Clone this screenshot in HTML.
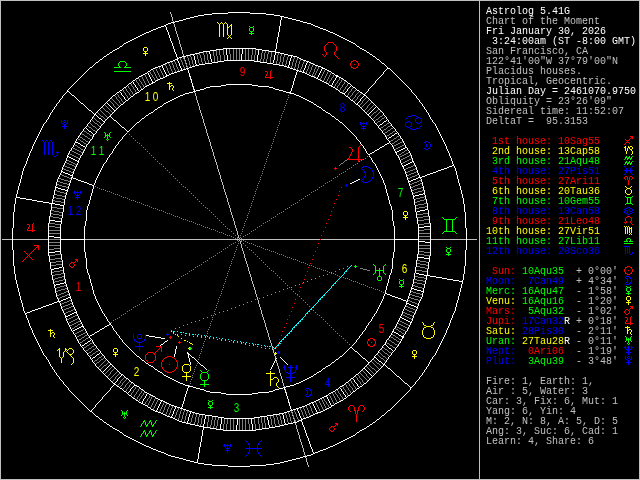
<!DOCTYPE html>
<html lang="en"><head><meta charset="utf-8"><title>Astrolog 5.41G - Chart of the Moment</title>
<style>
html,body{margin:0;padding:0;background:#000;}
body{width:640px;height:480px;overflow:hidden;}
svg{display:block;will-change:transform;}
.sb text{font-family:"Liberation Mono",monospace;font-size:10px;white-space:pre;}
.hn text{font-family:"Liberation Sans",sans-serif;font-size:12.5px;}
</style></head><body>
<svg width="640" height="480" viewBox="0 0 640 480">
<rect width="640" height="480" fill="#000"/>
<g id="chart" shape-rendering="crispEdges" fill="none" stroke-width="1" transform="translate(0,0.5)">
<g id="border"><path stroke="#c0c0c0" d="M0 0h640M0 1h1M479 1h1M639 1h1M0 2h1M479 2h1M639 2h1M0 3h1M479 3h1M639 3h1M0 4h1M479 4h1M639 4h1M0 5h1M479 5h1M639 5h1M0 6h1M479 6h1M639 6h1M0 7h1M479 7h1M639 7h1M0 8h1M479 8h1M639 8h1M0 9h1M479 9h1M639 9h1M0 10h1M479 10h1M639 10h1M0 11h1M479 11h1M639 11h1M0 12h1M479 12h1M639 12h1M0 13h1M479 13h1M639 13h1M0 14h1M479 14h1M639 14h1M0 15h1M479 15h1M639 15h1M0 16h1M479 16h1M639 16h1M0 17h1M479 17h1M639 17h1M0 18h1M479 18h1M639 18h1M0 19h1M479 19h1M639 19h1M0 20h1M479 20h1M639 20h1M0 21h1M479 21h1M639 21h1M0 22h1M479 22h1M639 22h1M0 23h1M479 23h1M639 23h1M0 24h1M479 24h1M639 24h1M0 25h1M479 25h1M639 25h1M0 26h1M479 26h1M639 26h1M0 27h1M479 27h1M639 27h1M0 28h1M479 28h1M639 28h1M0 29h1M479 29h1M639 29h1M0 30h1M479 30h1M639 30h1M0 31h1M479 31h1M639 31h1M0 32h1M479 32h1M639 32h1M0 33h1M479 33h1M639 33h1M0 34h1M479 34h1M639 34h1M0 35h1M479 35h1M639 35h1M0 36h1M479 36h1M639 36h1M0 37h1M479 37h1M639 37h1M0 38h1M479 38h1M639 38h1M0 39h1M479 39h1M639 39h1M0 40h1M479 40h1M639 40h1M0 41h1M479 41h1M639 41h1M0 42h1M479 42h1M639 42h1M0 43h1M479 43h1M639 43h1M0 44h1M479 44h1M639 44h1M0 45h1M479 45h1M639 45h1M0 46h1M479 46h1M639 46h1M0 47h1M479 47h1M639 47h1M0 48h1M479 48h1M639 48h1M0 49h1M479 49h1M639 49h1M0 50h1M479 50h1M639 50h1M0 51h1M479 51h1M639 51h1M0 52h1M479 52h1M639 52h1M0 53h1M479 53h1M639 53h1M0 54h1M479 54h1M639 54h1M0 55h1M479 55h1M639 55h1M0 56h1M479 56h1M639 56h1M0 57h1M479 57h1M639 57h1M0 58h1M479 58h1M639 58h1M0 59h1M479 59h1M639 59h1M0 60h1M479 60h1M639 60h1M0 61h1M479 61h1M639 61h1M0 62h1M479 62h1M639 62h1M0 63h1M479 63h1M639 63h1M0 64h1M479 64h1M639 64h1M0 65h1M479 65h1M639 65h1M0 66h1M479 66h1M639 66h1M0 67h1M479 67h1M639 67h1M0 68h1M479 68h1M639 68h1M0 69h1M479 69h1M639 69h1M0 70h1M479 70h1M639 70h1M0 71h1M479 71h1M639 71h1M0 72h1M479 72h1M639 72h1M0 73h1M479 73h1M639 73h1M0 74h1M479 74h1M639 74h1M0 75h1M479 75h1M639 75h1M0 76h1M479 76h1M639 76h1M0 77h1M479 77h1M639 77h1M0 78h1M479 78h1M639 78h1M0 79h1M479 79h1M639 79h1M0 80h1M479 80h1M639 80h1M0 81h1M479 81h1M639 81h1M0 82h1M479 82h1M639 82h1M0 83h1M479 83h1M639 83h1M0 84h1M479 84h1M639 84h1M0 85h1M479 85h1M639 85h1M0 86h1M479 86h1M639 86h1M0 87h1M479 87h1M639 87h1M0 88h1M479 88h1M639 88h1M0 89h1M479 89h1M639 89h1M0 90h1M479 90h1M639 90h1M0 91h1M479 91h1M639 91h1M0 92h1M479 92h1M639 92h1M0 93h1M479 93h1M639 93h1M0 94h1M479 94h1M639 94h1M0 95h1M479 95h1M639 95h1M0 96h1M479 96h1M639 96h1M0 97h1M479 97h1M639 97h1M0 98h1M479 98h1M639 98h1M0 99h1M479 99h1M639 99h1M0 100h1M479 100h1M639 100h1M0 101h1M479 101h1M639 101h1M0 102h1M479 102h1M639 102h1M0 103h1M479 103h1M639 103h1M0 104h1M479 104h1M639 104h1M0 105h1M479 105h1M639 105h1M0 106h1M479 106h1M639 106h1M0 107h1M479 107h1M639 107h1M0 108h1M479 108h1M639 108h1M0 109h1M479 109h1M639 109h1M0 110h1M479 110h1M639 110h1M0 111h1M479 111h1M639 111h1M0 112h1M479 112h1M639 112h1M0 113h1M479 113h1M639 113h1M0 114h1M479 114h1M639 114h1M0 115h1M479 115h1M639 115h1M0 116h1M479 116h1M639 116h1M0 117h1M479 117h1M639 117h1M0 118h1M479 118h1M639 118h1M0 119h1M479 119h1M639 119h1M0 120h1M479 120h1M639 120h1M0 121h1M479 121h1M639 121h1M0 122h1M479 122h1M639 122h1M0 123h1M479 123h1M639 123h1M0 124h1M479 124h1M639 124h1M0 125h1M479 125h1M639 125h1M0 126h1M479 126h1M639 126h1M0 127h1M479 127h1M639 127h1M0 128h1M479 128h1M639 128h1M0 129h1M479 129h1M639 129h1M0 130h1M479 130h1M639 130h1M0 131h1M479 131h1M639 131h1M0 132h1M479 132h1M639 132h1M0 133h1M479 133h1M639 133h1M0 134h1M479 134h1M639 134h1M0 135h1M479 135h1M639 135h1M0 136h1M479 136h1M639 136h1M0 137h1M479 137h1M639 137h1M0 138h1M479 138h1M639 138h1M0 139h1M479 139h1M639 139h1M0 140h1M479 140h1M639 140h1M0 141h1M479 141h1M639 141h1M0 142h1M479 142h1M639 142h1M0 143h1M479 143h1M639 143h1M0 144h1M479 144h1M639 144h1M0 145h1M479 145h1M639 145h1M0 146h1M479 146h1M639 146h1M0 147h1M479 147h1M639 147h1M0 148h1M479 148h1M639 148h1M0 149h1M479 149h1M639 149h1M0 150h1M479 150h1M639 150h1M0 151h1M479 151h1M639 151h1M0 152h1M479 152h1M639 152h1M0 153h1M479 153h1M639 153h1M0 154h1M479 154h1M639 154h1M0 155h1M479 155h1M639 155h1M0 156h1M479 156h1M639 156h1M0 157h1M479 157h1M639 157h1M0 158h1M479 158h1M639 158h1M0 159h1M479 159h1M639 159h1M0 160h1M479 160h1M639 160h1M0 161h1M479 161h1M639 161h1M0 162h1M479 162h1M639 162h1M0 163h1M479 163h1M639 163h1M0 164h1M479 164h1M639 164h1M0 165h1M479 165h1M639 165h1M0 166h1M479 166h1M639 166h1M0 167h1M479 167h1M639 167h1M0 168h1M479 168h1M639 168h1M0 169h1M479 169h1M639 169h1M0 170h1M479 170h1M639 170h1M0 171h1M479 171h1M639 171h1M0 172h1M479 172h1M639 172h1M0 173h1M479 173h1M639 173h1M0 174h1M479 174h1M639 174h1M0 175h1M479 175h1M639 175h1M0 176h1M479 176h1M639 176h1M0 177h1M479 177h1M639 177h1M0 178h1M479 178h1M639 178h1M0 179h1M479 179h1M639 179h1M0 180h1M479 180h1M639 180h1M0 181h1M479 181h1M639 181h1M0 182h1M479 182h1M639 182h1M0 183h1M479 183h1M639 183h1M0 184h1M479 184h1M639 184h1M0 185h1M479 185h1M639 185h1M0 186h1M479 186h1M639 186h1M0 187h1M479 187h1M639 187h1M0 188h1M479 188h1M639 188h1M0 189h1M479 189h1M639 189h1M0 190h1M479 190h1M639 190h1M0 191h1M479 191h1M639 191h1M0 192h1M479 192h1M639 192h1M0 193h1M479 193h1M639 193h1M0 194h1M479 194h1M639 194h1M0 195h1M479 195h1M639 195h1M0 196h1M479 196h1M639 196h1M0 197h1M479 197h1M639 197h1M0 198h1M479 198h1M639 198h1M0 199h1M479 199h1M639 199h1M0 200h1M479 200h1M639 200h1M0 201h1M479 201h1M639 201h1M0 202h1M479 202h1M639 202h1M0 203h1M479 203h1M639 203h1M0 204h1M479 204h1M639 204h1M0 205h1M479 205h1M639 205h1M0 206h1M479 206h1M639 206h1M0 207h1M479 207h1M639 207h1M0 208h1M479 208h1M639 208h1M0 209h1M479 209h1M639 209h1M0 210h1M479 210h1M639 210h1M0 211h1M479 211h1M639 211h1M0 212h1M479 212h1M639 212h1M0 213h1M479 213h1M639 213h1M0 214h1M479 214h1M639 214h1M0 215h1M479 215h1M639 215h1M0 216h1M479 216h1M639 216h1M0 217h1M479 217h1M639 217h1M0 218h1M479 218h1M639 218h1M0 219h1M479 219h1M639 219h1M0 220h1M479 220h1M639 220h1M0 221h1M479 221h1M639 221h1M0 222h1M479 222h1M639 222h1M0 223h1M479 223h1M639 223h1M0 224h1M479 224h1M639 224h1M0 225h1M479 225h1M639 225h1M0 226h1M479 226h1M639 226h1M0 227h1M479 227h1M639 227h1M0 228h1M479 228h1M639 228h1M0 229h1M479 229h1M639 229h1M0 230h1M479 230h1M639 230h1M0 231h1M479 231h1M639 231h1M0 232h1M479 232h1M639 232h1M0 233h1M479 233h1M639 233h1M0 234h1M479 234h1M639 234h1M0 235h1M479 235h1M639 235h1M0 236h1M479 236h1M639 236h1M0 237h1M479 237h1M639 237h1M0 238h1M479 238h1M639 238h1M0 239h1M479 239h1M639 239h1M0 240h1M479 240h1M639 240h1M0 241h1M479 241h1M639 241h1M0 242h1M479 242h1M639 242h1M0 243h1M479 243h1M639 243h1M0 244h1M479 244h1M639 244h1M0 245h1M479 245h1M639 245h1M0 246h1M479 246h1M639 246h1M0 247h1M479 247h1M639 247h1M0 248h1M479 248h1M639 248h1M0 249h1M479 249h1M639 249h1M0 250h1M479 250h1M639 250h1M0 251h1M479 251h1M639 251h1M0 252h1M479 252h1M639 252h1M0 253h1M479 253h1M639 253h1M0 254h1M479 254h1M639 254h1M0 255h1M479 255h1M639 255h1M0 256h1M479 256h1M639 256h1M0 257h1M479 257h1M639 257h1M0 258h1M479 258h1M639 258h1M0 259h1M479 259h1M639 259h1M0 260h1M479 260h1M639 260h1M0 261h1M479 261h1M639 261h1M0 262h1M479 262h1M639 262h1M0 263h1M479 263h1M639 263h1M0 264h1M479 264h1M639 264h1M0 265h1M479 265h1M639 265h1M0 266h1M479 266h1M639 266h1M0 267h1M479 267h1M639 267h1M0 268h1M479 268h1M639 268h1M0 269h1M479 269h1M639 269h1M0 270h1M479 270h1M639 270h1M0 271h1M479 271h1M639 271h1M0 272h1M479 272h1M639 272h1M0 273h1M479 273h1M639 273h1M0 274h1M479 274h1M639 274h1M0 275h1M479 275h1M639 275h1M0 276h1M479 276h1M639 276h1M0 277h1M479 277h1M639 277h1M0 278h1M479 278h1M639 278h1M0 279h1M479 279h1M639 279h1M0 280h1M479 280h1M639 280h1M0 281h1M479 281h1M639 281h1M0 282h1M479 282h1M639 282h1M0 283h1M479 283h1M639 283h1M0 284h1M479 284h1M639 284h1M0 285h1M479 285h1M639 285h1M0 286h1M479 286h1M639 286h1M0 287h1M479 287h1M639 287h1M0 288h1M479 288h1M639 288h1M0 289h1M479 289h1M639 289h1M0 290h1M479 290h1M639 290h1M0 291h1M479 291h1M639 291h1M0 292h1M479 292h1M639 292h1M0 293h1M479 293h1M639 293h1M0 294h1M479 294h1M639 294h1M0 295h1M479 295h1M639 295h1M0 296h1M479 296h1M639 296h1M0 297h1M479 297h1M639 297h1M0 298h1M479 298h1M639 298h1M0 299h1M479 299h1M639 299h1M0 300h1M479 300h1M639 300h1M0 301h1M479 301h1M639 301h1M0 302h1M479 302h1M639 302h1M0 303h1M479 303h1M639 303h1M0 304h1M479 304h1M639 304h1M0 305h1M479 305h1M639 305h1M0 306h1M479 306h1M639 306h1M0 307h1M479 307h1M639 307h1M0 308h1M479 308h1M639 308h1M0 309h1M479 309h1M639 309h1M0 310h1M479 310h1M639 310h1M0 311h1M479 311h1M639 311h1M0 312h1M479 312h1M639 312h1M0 313h1M479 313h1M639 313h1M0 314h1M479 314h1M639 314h1M0 315h1M479 315h1M639 315h1M0 316h1M479 316h1M639 316h1M0 317h1M479 317h1M639 317h1M0 318h1M479 318h1M639 318h1M0 319h1M479 319h1M639 319h1M0 320h1M479 320h1M639 320h1M0 321h1M479 321h1M639 321h1M0 322h1M479 322h1M639 322h1M0 323h1M479 323h1M639 323h1M0 324h1M479 324h1M639 324h1M0 325h1M479 325h1M639 325h1M0 326h1M479 326h1M639 326h1M0 327h1M479 327h1M639 327h1M0 328h1M479 328h1M639 328h1M0 329h1M479 329h1M639 329h1M0 330h1M479 330h1M639 330h1M0 331h1M479 331h1M639 331h1M0 332h1M479 332h1M639 332h1M0 333h1M479 333h1M639 333h1M0 334h1M479 334h1M639 334h1M0 335h1M479 335h1M639 335h1M0 336h1M479 336h1M639 336h1M0 337h1M479 337h1M639 337h1M0 338h1M479 338h1M639 338h1M0 339h1M479 339h1M639 339h1M0 340h1M479 340h1M639 340h1M0 341h1M479 341h1M639 341h1M0 342h1M479 342h1M639 342h1M0 343h1M479 343h1M639 343h1M0 344h1M479 344h1M639 344h1M0 345h1M479 345h1M639 345h1M0 346h1M479 346h1M639 346h1M0 347h1M479 347h1M639 347h1M0 348h1M479 348h1M639 348h1M0 349h1M479 349h1M639 349h1M0 350h1M479 350h1M639 350h1M0 351h1M479 351h1M639 351h1M0 352h1M479 352h1M639 352h1M0 353h1M479 353h1M639 353h1M0 354h1M479 354h1M639 354h1M0 355h1M479 355h1M639 355h1M0 356h1M479 356h1M639 356h1M0 357h1M479 357h1M639 357h1M0 358h1M479 358h1M639 358h1M0 359h1M479 359h1M639 359h1M0 360h1M479 360h1M639 360h1M0 361h1M479 361h1M639 361h1M0 362h1M479 362h1M639 362h1M0 363h1M479 363h1M639 363h1M0 364h1M479 364h1M639 364h1M0 365h1M479 365h1M639 365h1M0 366h1M479 366h1M639 366h1M0 367h1M479 367h1M639 367h1M0 368h1M479 368h1M639 368h1M0 369h1M479 369h1M639 369h1M0 370h1M479 370h1M639 370h1M0 371h1M479 371h1M639 371h1M0 372h1M479 372h1M639 372h1M0 373h1M479 373h1M639 373h1M0 374h1M479 374h1M639 374h1M0 375h1M479 375h1M639 375h1M0 376h1M479 376h1M639 376h1M0 377h1M479 377h1M639 377h1M0 378h1M479 378h1M639 378h1M0 379h1M479 379h1M639 379h1M0 380h1M479 380h1M639 380h1M0 381h1M479 381h1M639 381h1M0 382h1M479 382h1M639 382h1M0 383h1M479 383h1M639 383h1M0 384h1M479 384h1M639 384h1M0 385h1M479 385h1M639 385h1M0 386h1M479 386h1M639 386h1M0 387h1M479 387h1M639 387h1M0 388h1M479 388h1M639 388h1M0 389h1M479 389h1M639 389h1M0 390h1M479 390h1M639 390h1M0 391h1M479 391h1M639 391h1M0 392h1M479 392h1M639 392h1M0 393h1M479 393h1M639 393h1M0 394h1M479 394h1M639 394h1M0 395h1M479 395h1M639 395h1M0 396h1M479 396h1M639 396h1M0 397h1M479 397h1M639 397h1M0 398h1M479 398h1M639 398h1M0 399h1M479 399h1M639 399h1M0 400h1M479 400h1M639 400h1M0 401h1M479 401h1M639 401h1M0 402h1M479 402h1M639 402h1M0 403h1M479 403h1M639 403h1M0 404h1M479 404h1M639 404h1M0 405h1M479 405h1M639 405h1M0 406h1M479 406h1M639 406h1M0 407h1M479 407h1M639 407h1M0 408h1M479 408h1M639 408h1M0 409h1M479 409h1M639 409h1M0 410h1M479 410h1M639 410h1M0 411h1M479 411h1M639 411h1M0 412h1M479 412h1M639 412h1M0 413h1M479 413h1M639 413h1M0 414h1M479 414h1M639 414h1M0 415h1M479 415h1M639 415h1M0 416h1M479 416h1M639 416h1M0 417h1M479 417h1M639 417h1M0 418h1M479 418h1M639 418h1M0 419h1M479 419h1M639 419h1M0 420h1M479 420h1M639 420h1M0 421h1M479 421h1M639 421h1M0 422h1M479 422h1M639 422h1M0 423h1M479 423h1M639 423h1M0 424h1M479 424h1M639 424h1M0 425h1M479 425h1M639 425h1M0 426h1M479 426h1M639 426h1M0 427h1M479 427h1M639 427h1M0 428h1M479 428h1M639 428h1M0 429h1M479 429h1M639 429h1M0 430h1M479 430h1M639 430h1M0 431h1M479 431h1M639 431h1M0 432h1M479 432h1M639 432h1M0 433h1M479 433h1M639 433h1M0 434h1M479 434h1M639 434h1M0 435h1M479 435h1M639 435h1M0 436h1M479 436h1M639 436h1M0 437h1M479 437h1M639 437h1M0 438h1M479 438h1M639 438h1M0 439h1M479 439h1M639 439h1M0 440h1M479 440h1M639 440h1M0 441h1M479 441h1M639 441h1M0 442h1M479 442h1M639 442h1M0 443h1M479 443h1M639 443h1M0 444h1M479 444h1M639 444h1M0 445h1M479 445h1M639 445h1M0 446h1M479 446h1M639 446h1M0 447h1M479 447h1M639 447h1M0 448h1M479 448h1M639 448h1M0 449h1M479 449h1M639 449h1M0 450h1M479 450h1M639 450h1M0 451h1M479 451h1M639 451h1M0 452h1M479 452h1M639 452h1M0 453h1M479 453h1M639 453h1M0 454h1M479 454h1M639 454h1M0 455h1M479 455h1M639 455h1M0 456h1M479 456h1M639 456h1M0 457h1M479 457h1M639 457h1M0 458h1M479 458h1M639 458h1M0 459h1M479 459h1M639 459h1M0 460h1M479 460h1M639 460h1M0 461h1M479 461h1M639 461h1M0 462h1M479 462h1M639 462h1M0 463h1M479 463h1M639 463h1M0 464h1M479 464h1M639 464h1M0 465h1M479 465h1M639 465h1M0 466h1M479 466h1M639 466h1M0 467h1M479 467h1M639 467h1M0 468h1M479 468h1M639 468h1M0 469h1M479 469h1M639 469h1M0 470h1M479 470h1M639 470h1M0 471h1M479 471h1M639 471h1M0 472h1M479 472h1M639 472h1M0 473h1M479 473h1M639 473h1M0 474h1M479 474h1M639 474h1M0 475h1M479 475h1M639 475h1M0 476h1M479 476h1M639 476h1M0 477h1M479 477h1M639 477h1M0 478h1M479 478h1M639 478h1M0 479h640"/></g>
<g id="axes"><path stroke="#c0c0c0" d="M170 12h1M170 13h1M171 14h1M171 15h1M171 16h1M172 17h1M172 18h1M172 19h1M172 20h1M173 21h1M173 22h1M173 23h1M174 24h1M174 25h1M174 26h1M175 27h1M175 28h1M175 29h1M175 30h1M176 31h1M176 32h1M176 33h1M177 34h1M177 35h1M177 36h1M178 37h1M178 38h1M178 39h1M179 40h1M179 41h1M179 42h1M179 43h1M180 44h1M180 45h1M180 46h1M181 47h1M181 48h1M181 49h1M182 50h1M182 51h1M182 52h1M182 53h1M183 54h1M183 55h1M183 56h1M184 57h1M184 58h1M184 59h1M185 60h1M185 61h1M185 62h1M186 63h1M186 64h1M186 65h1M186 66h1M187 67h1M187 68h1M187 69h1M188 70h1M188 71h1M188 72h1M189 73h1M189 74h1M189 75h1M189 76h1M190 77h1M190 78h1M190 79h1M191 80h1M191 81h1M191 82h1M192 83h1M192 84h1M192 85h1M192 86h1M193 87h1M193 88h1M193 89h1M194 90h1M194 91h1M194 92h1M195 93h1M195 94h1M195 95h1M196 96h1M196 97h1M196 98h1M196 99h1M197 100h1M197 101h1M197 102h1M198 103h1M198 104h1M198 105h1M199 106h1M199 107h1M199 108h1M199 109h1M200 110h1M200 111h1M200 112h1M201 113h1M201 114h1M201 115h1M202 116h1M202 117h1M202 118h1M203 119h1M203 120h1M203 121h1M203 122h1M204 123h1M204 124h1M204 125h1M205 126h1M205 127h1M205 128h1M206 129h1M206 130h1M206 131h1M206 132h1M207 133h1M207 134h1M207 135h1M208 136h1M208 137h1M208 138h1M209 139h1M209 140h1M209 141h1M210 142h1M210 143h1M210 144h1M210 145h1M211 146h1M211 147h1M211 148h1M212 149h1M212 150h1M212 151h1M213 152h1M213 153h1M213 154h1M213 155h1M214 156h1M214 157h1M214 158h1M215 159h1M215 160h1M215 161h1M216 162h1M216 163h1M216 164h1M217 165h1M217 166h1M217 167h1M217 168h1M218 169h1M218 170h1M218 171h1M219 172h1M219 173h1M219 174h1M220 175h1M220 176h1M220 177h1M220 178h1M221 179h1M221 180h1M221 181h1M222 182h1M222 183h1M222 184h1M223 185h1M223 186h1M223 187h1M223 188h1M224 189h1M224 190h1M224 191h1M225 192h1M225 193h1M225 194h1M226 195h1M226 196h1M226 197h1M227 198h1M227 199h1M227 200h1M227 201h1M228 202h1M228 203h1M228 204h1M229 205h1M229 206h1M229 207h1M230 208h1M230 209h1M230 210h1M230 211h1M231 212h1M231 213h1M231 214h1M232 215h1M232 216h1M232 217h1M233 218h1M233 219h1M233 220h1M234 221h1M234 222h1M234 223h1M234 224h1M235 225h1M235 226h1M235 227h1M236 228h1M236 229h1M236 230h1M237 231h1M237 232h1M237 233h1M237 234h1M238 235h1M238 236h1M238 237h1M239 238h1M2 239h475M239 240h1M240 241h1M240 242h1M240 243h1M241 244h1M241 245h1M241 246h1M241 247h1M242 248h1M242 249h1M242 250h1M243 251h1M243 252h1M243 253h1M244 254h1M244 255h1M244 256h1M244 257h1M245 258h1M245 259h1M245 260h1M246 261h1M246 262h1M246 263h1M247 264h1M247 265h1M247 266h1M248 267h1M248 268h1M248 269h1M248 270h1M249 271h1M249 272h1M249 273h1M250 274h1M250 275h1M250 276h1M251 277h1M251 278h1M251 279h1M251 280h1M252 281h1M252 282h1M252 283h1M253 284h1M253 285h1M253 286h1M254 287h1M254 288h1M254 289h1M255 290h1M255 291h1M255 292h1M255 293h1M256 294h1M256 295h1M256 296h1M257 297h1M257 298h1M257 299h1M258 300h1M258 301h1M258 302h1M258 303h1M259 304h1M259 305h1M259 306h1M260 307h1M260 308h1M260 309h1M261 310h1M261 311h1M261 312h1M261 313h1M262 314h1M262 315h1M262 316h1M263 317h1M263 318h1M263 319h1M264 320h1M264 321h1M264 322h1M265 323h1M265 324h1M265 325h1M265 326h1M266 327h1M266 328h1M266 329h1M267 330h1M267 331h1M267 332h1M268 333h1M268 334h1M268 335h1M268 336h1M269 337h1M269 338h1M269 339h1M270 340h1M270 341h1M270 342h1M271 343h1M271 344h1M271 345h1M272 346h1M272 347h1M272 348h1M272 349h1M273 350h1M273 351h1M273 352h1M274 353h1M274 354h1M274 355h1M275 356h1M275 357h1M275 358h1M275 359h1M276 360h1M276 361h1M276 362h1M277 363h1M277 364h1M277 365h1M278 366h1M278 367h1M278 368h1M279 369h1M279 370h1M279 371h1M279 372h1M280 373h1M280 374h1M280 375h1M281 376h1M281 377h1M281 378h1M282 379h1M282 380h1M282 381h1M282 382h1M283 383h1M283 384h1M283 385h1M284 386h1M284 387h1M284 388h1M285 389h1M285 390h1M285 391h1M286 392h1M286 393h1M286 394h1M286 395h1M287 396h1M287 397h1M287 398h1M288 399h1M288 400h1M288 401h1M289 402h1M289 403h1M289 404h1M289 405h1M290 406h1M290 407h1M290 408h1M291 409h1M291 410h1M291 411h1M292 412h1M292 413h1M292 414h1M292 415h1M293 416h1M293 417h1M293 418h1M294 419h1M294 420h1M294 421h1M295 422h1M295 423h1M295 424h1M296 425h1M296 426h1M296 427h1M296 428h1M297 429h1M297 430h1M297 431h1M298 432h1M298 433h1M298 434h1M299 435h1M299 436h1M299 437h1M299 438h1M300 439h1M300 440h1M300 441h1M301 442h1M301 443h1M301 444h1M302 445h1M302 446h1M302 447h1M303 448h1M303 449h1M303 450h1M303 451h1M304 452h1M304 453h1M304 454h1M305 455h1M305 456h1M305 457h1M306 458h1M306 459h1M306 460h1M306 461h1M307 462h1M307 463h1M307 464h1M308 465h1M308 466h1"/></g>
<g id="ticks"><path stroke="#ffffff" d="M242 48h1M226 49h1M242 49h1M258 49h1M226 50h1M242 50h1M258 50h1M209 51h1M226 51h1M242 51h1M258 51h1M209 52h1M226 52h1M242 52h1M258 52h1M275 52h1M209 53h1M226 53h1M242 53h1M258 53h1M275 53h1M193 54h1M210 54h1M226 54h1M241 54h1M258 54h1M275 54h1M193 55h1M210 55h1M227 55h1M241 55h1M257 55h1M274 55h1M194 56h1M210 56h1M227 56h1M241 56h1M257 56h1M274 56h1M291 56h1M194 57h1M210 57h1M227 57h1M241 57h1M257 57h1M274 57h1M291 57h1M194 58h1M210 58h1M227 58h1M241 58h1M257 58h1M274 58h1M290 58h1M177 59h1M194 59h1M211 59h1M227 59h1M241 59h1M257 59h1M274 59h1M290 59h1M177 60h1M195 60h1M211 60h1M227 60h1M257 60h1M273 60h1M290 60h1M178 61h1M195 61h1M211 61h1M273 61h1M289 61h1M307 61h1M178 62h1M195 62h1M273 62h1M289 62h1M307 62h1M179 63h1M195 63h1M289 63h1M306 63h1M179 64h1M196 64h1M289 64h1M306 64h1M161 65h1M179 65h1M196 65h1M288 65h1M305 65h1M162 66h1M180 66h1M288 66h1M305 66h1M162 67h1M180 67h1M305 67h1M163 68h1M181 68h1M304 68h1M322 68h1M163 69h1M181 69h1M304 69h1M321 69h1M164 70h1M303 70h1M321 70h1M164 71h1M303 71h1M320 71h1M147 72h1M165 72h1M320 72h1M148 73h1M165 73h1M319 73h1M148 74h1M166 74h1M319 74h1M149 75h1M166 75h1M318 75h1M337 75h1M149 76h1M318 76h1M336 76h1M150 77h1M317 77h1M336 77h1M150 78h1M335 78h1M151 79h1M335 79h1M151 80h1M334 80h1M132 81h1M152 81h1M333 81h1M133 82h1M152 82h1M333 82h1M133 83h1M332 83h1M134 84h1M332 84h1M135 85h1M331 85h1M351 85h1M135 86h1M350 86h1M136 87h1M349 87h1M137 88h1M348 88h1M137 89h1M347 89h1M138 90h1M347 90h1M119 91h1M346 91h1M120 92h1M345 92h1M121 93h1M344 93h1M121 94h1M122 95h1M364 95h1M123 96h1M363 96h1M124 97h1M362 97h1M124 98h1M361 98h1M125 99h1M360 99h1M126 100h1M360 100h1M359 101h1M106 102h1M358 102h1M107 103h1M357 103h1M108 104h1M109 105h1M110 106h1M376 106h1M111 107h1M375 107h1M112 108h1M374 108h1M113 109h1M373 109h1M114 110h1M372 110h1M371 111h1M370 112h1M369 113h1M95 114h1M368 114h1M96 115h1M97 116h1M98 117h1M99 118h2M101 119h1M387 119h1M102 120h1M386 120h1M103 121h1M384 121h2M383 122h1M382 123h1M380 124h2M379 125h1M378 126h1M85 127h1M86 128h1M87 129h1M88 130h1M89 131h2M91 132h1M397 132h1M92 133h1M395 133h2M93 134h1M394 134h1M392 135h2M391 136h1M389 137h2M388 138h1M75 141h1M76 142h2M78 143h2M80 144h1M81 145h2M83 146h2M85 147h1M405 147h2M403 148h2M401 149h2M399 150h2M397 151h2M396 152h1M68 156h1M69 157h2M71 158h2M73 159h2M75 160h2M77 161h1M412 161h2M410 162h2M408 163h2M406 164h2M404 165h2M403 166h1M61 171h2M63 172h2M65 173h3M68 174h2M70 175h2M418 177h2M416 178h2M413 179h3M411 180h2M409 181h2M56 187h2M58 188h3M61 189h4M65 190h2M423 193h2M419 194h4M415 195h4M413 196h2M52 203h3M55 204h5M60 205h3M425 209h3M420 210h5M417 211h3M49 220h6M55 221h6M424 226h6M418 227h6M48 236h6M54 237h6M419 241h6M425 242h6M55 251h6M49 252h6M418 257h6M424 258h6M59 267h3M54 268h5M51 269h3M416 273h3M419 274h5M424 275h3M64 282h2M60 283h4M56 284h4M54 285h2M412 288h2M414 289h3M417 290h4M421 291h2M68 297h2M66 298h2M63 299h3M61 300h2M59 301h2M407 303h2M409 304h2M411 305h3M414 306h2M416 307h2M74 312h2M72 313h2M70 314h2M68 315h2M66 316h2M65 317h1M401 317h1M402 318h2M404 319h2M406 320h2M408 321h2M410 322h1M81 326h2M79 327h2M77 328h2M75 329h2M73 330h2M72 331h1M393 331h1M394 332h2M396 333h2M398 334h1M399 335h2M401 336h2M403 337h1M90 340h1M88 341h2M87 342h1M85 343h2M84 344h1M385 344h1M82 345h2M386 345h1M81 346h1M387 346h1M388 347h1M389 348h2M391 349h1M392 350h1M393 351h1M100 352h1M99 353h1M97 354h2M96 355h1M95 356h1M93 357h2M375 357h1M92 358h1M376 358h1M91 359h1M377 359h1M378 360h1M379 361h2M381 362h1M382 363h1M110 364h1M383 364h1M109 365h1M108 366h1M107 367h1M106 368h1M364 368h1M105 369h1M365 369h1M104 370h1M366 370h1M103 371h1M367 371h1M102 372h1M368 372h1M369 373h1M370 374h1M121 375h1M371 375h1M120 376h1M372 376h1M119 377h1M118 378h1M352 378h1M117 379h1M353 379h1M117 380h1M354 380h1M116 381h1M354 381h1M115 382h1M355 382h1M114 383h1M356 383h1M357 384h1M134 385h1M357 385h1M133 386h1M358 386h1M132 387h1M359 387h1M131 388h1M340 388h1M130 389h1M341 389h1M130 390h1M341 390h1M129 391h1M342 391h1M128 392h1M343 392h1M127 393h1M147 393h1M343 393h1M146 394h1M344 394h1M146 395h1M345 395h1M145 396h1M326 396h1M345 396h1M145 397h1M327 397h1M346 397h1M144 398h1M327 398h1M143 399h1M328 399h1M143 400h1M328 400h1M142 401h1M161 401h1M329 401h1M142 402h1M160 402h1M329 402h1M141 403h1M160 403h1M312 403h1M330 403h1M159 404h1M313 404h1M330 404h1M159 405h1M313 405h1M331 405h1M158 406h1M314 406h1M331 406h1M158 407h1M175 407h1M314 407h1M157 408h1M175 408h1M315 408h1M157 409h1M174 409h1M297 409h1M315 409h1M156 410h1M174 410h1M297 410h1M316 410h1M173 411h1M298 411h1M316 411h1M173 412h1M190 412h1M298 412h1M317 412h1M173 413h1M190 413h1M282 413h1M299 413h1M317 413h1M172 414h1M189 414h1M282 414h1M299 414h1M172 415h1M189 415h1M283 415h1M299 415h1M171 416h1M189 416h1M205 416h1M283 416h1M300 416h1M171 417h1M188 417h1M205 417h1M267 417h1M283 417h1M300 417h1M188 418h1M205 418h1M221 418h1M251 418h1M267 418h1M283 418h1M301 418h1M188 419h1M204 419h1M221 419h1M237 419h1M251 419h1M267 419h1M284 419h1M301 419h1M188 420h1M204 420h1M221 420h1M237 420h1M251 420h1M268 420h1M284 420h1M187 421h1M204 421h1M221 421h1M237 421h1M251 421h1M268 421h1M284 421h1M187 422h1M204 422h1M221 422h1M237 422h1M251 422h1M268 422h1M284 422h1M204 423h1M221 423h1M237 423h1M251 423h1M268 423h1M285 423h1M203 424h1M220 424h1M237 424h1M252 424h1M268 424h1M285 424h1M203 425h1M220 425h1M236 425h1M252 425h1M269 425h1M203 426h1M220 426h1M236 426h1M252 426h1M269 426h1M220 427h1M236 427h1M252 427h1M269 427h1M220 428h1M236 428h1M252 428h1M220 429h1M236 429h1M252 429h1M236 430h1"/><path stroke="#808080" d="M233 48h1M236 48h1M239 48h1M245 48h1M219 49h1M223 49h1M229 49h1M233 49h1M236 49h1M239 49h1M245 49h1M248 49h1M252 49h1M255 49h1M213 50h1M216 50h1M219 50h1M223 50h1M229 50h1M233 50h1M236 50h1M239 50h1M245 50h1M248 50h1M252 50h1M255 50h1M262 50h1M265 50h1M206 51h1M213 51h1M216 51h1M219 51h1M223 51h1M229 51h1M233 51h1M236 51h1M239 51h1M245 51h1M248 51h1M252 51h1M255 51h1M262 51h1M265 51h1M268 51h1M271 51h1M203 52h1M206 52h1M213 52h1M216 52h1M219 52h1M223 52h1M229 52h1M233 52h1M236 52h1M239 52h1M245 52h1M248 52h1M252 52h1M255 52h1M262 52h1M265 52h1M268 52h1M271 52h1M278 52h1M196 53h1M199 53h1M203 53h1M206 53h1M213 53h1M216 53h1M219 53h1M223 53h1M229 53h1M233 53h1M236 53h1M239 53h1M245 53h1M248 53h1M252 53h1M255 53h1M261 53h1M264 53h1M268 53h1M271 53h1M278 53h1M281 53h1M196 54h1M199 54h1M203 54h1M207 54h1M213 54h1M216 54h1M219 54h1M223 54h1M230 54h1M233 54h1M236 54h1M239 54h1M245 54h1M248 54h1M252 54h1M255 54h1M261 54h1M264 54h1M267 54h1M271 54h1M278 54h1M281 54h1M284 54h1M190 55h1M197 55h1M200 55h1M204 55h1M207 55h1M213 55h1M216 55h1M220 55h1M224 55h1M230 55h1M233 55h1M236 55h1M239 55h1M245 55h1M248 55h1M251 55h1M254 55h1M261 55h1M264 55h1M267 55h1M271 55h1M277 55h1M281 55h1M284 55h1M288 55h1M187 56h1M190 56h1M197 56h1M200 56h1M204 56h1M207 56h1M214 56h1M217 56h1M220 56h1M224 56h1M230 56h1M233 56h1M236 56h1M239 56h1M245 56h1M248 56h1M251 56h1M254 56h1M261 56h1M264 56h1M267 56h1M271 56h1M277 56h1M280 56h1M284 56h1M288 56h1M183 57h1M187 57h1M191 57h1M197 57h1M200 57h1M204 57h1M207 57h1M214 57h1M217 57h1M220 57h1M224 57h1M230 57h1M233 57h1M236 57h1M239 57h1M245 57h1M248 57h1M251 57h1M254 57h1M261 57h1M264 57h1M267 57h1M270 57h1M277 57h1M280 57h1M283 57h1M287 57h1M294 57h1M180 58h1M183 58h1M188 58h1M191 58h1M197 58h1M201 58h1M204 58h1M207 58h1M214 58h1M217 58h1M220 58h1M224 58h1M230 58h1M233 58h1M236 58h1M239 58h1M245 58h1M248 58h1M251 58h1M254 58h1M261 58h1M264 58h1M267 58h1M270 58h1M277 58h1M280 58h1M283 58h1M287 58h1M294 58h1M297 58h1M180 59h1M184 59h1M188 59h1M191 59h1M198 59h1M201 59h1M204 59h1M207 59h1M214 59h1M217 59h1M220 59h1M224 59h1M230 59h1M233 59h1M236 59h1M239 59h1M245 59h1M248 59h1M251 59h1M254 59h1M260 59h1M263 59h1M266 59h1M270 59h1M277 59h1M280 59h1M283 59h1M287 59h1M293 59h1M297 59h1M300 59h1M174 60h1M181 60h1M184 60h1M188 60h1M192 60h1M198 60h1M201 60h1M204 60h1M208 60h1M214 60h1M217 60h1M220 60h1M224 60h1M251 60h1M254 60h1M260 60h1M263 60h1M266 60h1M270 60h1M277 60h1M280 60h1M283 60h1M286 60h1M293 60h1M296 60h1M300 60h1M304 60h1M171 61h1M174 61h1M181 61h1M185 61h1M189 61h1M192 61h1M198 61h1M201 61h1M205 61h1M208 61h1M214 61h1M217 61h1M260 61h1M263 61h1M266 61h1M270 61h1M276 61h1M280 61h1M283 61h1M286 61h1M293 61h1M296 61h1M299 61h1M304 61h1M168 62h1M171 62h1M175 62h1M182 62h1M185 62h1M189 62h1M192 62h1M198 62h1M202 62h1M205 62h1M208 62h1M270 62h1M276 62h1M279 62h1M282 62h1M286 62h1M292 62h1M296 62h1M299 62h1M303 62h1M310 62h1M168 63h1M172 63h1M175 63h1M182 63h1M185 63h1M189 63h1M192 63h1M199 63h1M202 63h1M205 63h1M276 63h1M279 63h1M282 63h1M286 63h1M292 63h1M295 63h1M299 63h1M303 63h1M310 63h1M313 63h1M165 64h1M169 64h1M172 64h1M176 64h1M182 64h1M186 64h1M189 64h1M193 64h1M199 64h1M279 64h1M282 64h1M285 64h1M292 64h1M295 64h1M298 64h1M302 64h1M309 64h1M313 64h1M165 65h1M169 65h1M173 65h1M176 65h1M183 65h1M186 65h1M190 65h1M193 65h1M285 65h1M292 65h1M295 65h1M298 65h1M302 65h1M309 65h1M312 65h1M316 65h1M158 66h1M166 66h1M170 66h1M173 66h1M176 66h1M183 66h1M187 66h1M190 66h1M291 66h1M295 66h1M298 66h1M302 66h1M308 66h1M312 66h1M316 66h1M319 66h1M159 67h1M166 67h1M170 67h1M173 67h1M177 67h1M184 67h1M187 67h1M291 67h1M294 67h1M298 67h1M301 67h1M308 67h1M311 67h1M315 67h1M318 67h1M155 68h1M159 68h1M167 68h1M170 68h1M174 68h1M177 68h1M184 68h1M294 68h1M297 68h1M301 68h1M308 68h1M311 68h1M315 68h1M318 68h1M152 69h1M156 69h1M160 69h1M167 69h1M171 69h1M174 69h1M178 69h1M297 69h1M300 69h1M307 69h1M311 69h1M314 69h1M317 69h1M325 69h1M153 70h1M156 70h1M160 70h1M167 70h1M171 70h1M175 70h1M178 70h1M300 70h1M307 70h1M310 70h1M314 70h1M317 70h1M324 70h1M149 71h1M153 71h1M157 71h1M161 71h1M168 71h1M172 71h1M175 71h1M306 71h1M310 71h1M314 71h1M316 71h1M324 71h1M328 71h1M150 72h1M154 72h1M157 72h1M161 72h1M168 72h1M172 72h1M306 72h1M309 72h1M313 72h1M316 72h1M323 72h1M327 72h1M331 72h1M150 73h1M154 73h1M158 73h1M162 73h1M169 73h1M309 73h1M313 73h1M315 73h1M323 73h1M327 73h1M330 73h1M144 74h1M151 74h1M155 74h1M158 74h1M162 74h1M169 74h1M312 74h1M315 74h1M322 74h1M326 74h1M330 74h1M334 74h1M145 75h1M152 75h1M155 75h1M159 75h1M163 75h1M312 75h1M314 75h1M322 75h1M326 75h1M329 75h1M333 75h1M141 76h1M145 76h1M152 76h1M156 76h1M159 76h1M163 76h1M314 76h1M321 76h1M325 76h1M329 76h1M333 76h1M142 77h1M146 77h1M153 77h1M156 77h1M160 77h1M321 77h1M325 77h1M328 77h1M332 77h1M340 77h1M138 78h1M142 78h1M146 78h1M154 78h1M157 78h1M160 78h1M320 78h1M324 78h1M328 78h1M331 78h1M339 78h1M135 79h1M139 79h1M143 79h1M147 79h1M154 79h1M157 79h1M320 79h1M324 79h1M327 79h1M331 79h1M339 79h1M342 79h1M136 80h1M139 80h1M143 80h1M147 80h1M155 80h1M323 80h1M327 80h1M330 80h1M338 80h1M341 80h1M136 81h1M140 81h1M144 81h1M148 81h1M326 81h1M329 81h1M337 81h1M341 81h1M345 81h1M137 82h1M141 82h1M144 82h1M148 82h1M326 82h1M329 82h1M337 82h1M340 82h1M344 82h1M130 83h1M138 83h1M141 83h1M145 83h1M149 83h1M328 83h1M336 83h1M339 83h1M344 83h1M348 83h1M131 84h1M138 84h1M142 84h1M145 84h1M335 84h1M339 84h1M343 84h1M347 84h1M127 85h1M131 85h1M139 85h1M143 85h1M146 85h1M335 85h1M338 85h1M342 85h1M347 85h1M128 86h1M132 86h1M140 86h1M143 86h1M334 86h1M337 86h1M342 86h1M346 86h1M124 87h1M128 87h1M133 87h1M140 87h1M144 87h1M337 87h1M341 87h1M345 87h1M353 87h1M125 88h1M129 88h1M133 88h1M141 88h1M336 88h1M340 88h1M345 88h1M352 88h1M122 89h1M126 89h1M130 89h1M134 89h1M340 89h1M344 89h1M351 89h1M356 89h1M123 90h1M126 90h1M130 90h1M135 90h1M339 90h1M343 90h1M351 90h1M355 90h1M123 91h1M127 91h1M131 91h1M135 91h1M343 91h1M350 91h1M354 91h1M359 91h1M124 92h1M128 92h1M132 92h1M136 92h1M342 92h1M349 92h1M353 92h1M358 92h1M116 93h1M125 93h1M129 93h1M132 93h1M348 93h1M352 93h1M357 93h1M361 93h1M117 94h1M125 94h1M129 94h1M133 94h1M348 94h1M352 94h1M356 94h1M360 94h1M114 95h1M118 95h1M126 95h1M130 95h1M347 95h1M351 95h1M355 95h1M359 95h1M115 96h1M118 96h1M127 96h1M131 96h1M350 96h1M355 96h1M358 96h1M116 97h1M119 97h1M127 97h1M349 97h1M354 97h1M357 97h1M366 97h1M111 98h1M116 98h1M120 98h1M128 98h1M353 98h1M357 98h1M365 98h1M112 99h1M117 99h1M121 99h1M352 99h1M356 99h1M364 99h1M369 99h1M109 100h1M113 100h1M118 100h1M121 100h1M355 100h1M363 100h1M368 100h1M110 101h1M114 101h1M119 101h1M122 101h1M354 101h1M362 101h1M367 101h1M111 102h1M115 102h1M119 102h1M123 102h1M362 102h1M366 102h1M371 102h1M112 103h1M116 103h1M120 103h1M361 103h1M365 103h1M370 103h1M104 104h1M113 104h1M117 104h1M121 104h1M360 104h1M364 104h1M369 104h1M374 104h1M105 105h1M113 105h1M118 105h1M359 105h1M363 105h1M368 105h1M373 105h1M106 106h1M114 106h1M119 106h1M362 106h1M367 106h1M372 106h1M102 107h1M107 107h1M115 107h1M361 107h1M367 107h1M371 107h1M103 108h1M108 108h1M116 108h1M366 108h1M370 108h1M99 109h1M104 109h1M109 109h1M365 109h1M369 109h1M378 109h1M100 110h1M105 110h1M110 110h1M364 110h1M368 110h1M377 110h1M101 111h1M106 111h2M111 111h1M367 111h1M376 111h1M380 111h1M97 112h1M102 112h1M108 112h1M112 112h1M366 112h1M374 112h2M379 112h1M98 113h1M103 113h1M109 113h1M373 113h1M378 113h1M99 114h1M104 114h1M110 114h1M372 114h1M377 114h1M383 114h1M100 115h1M105 115h1M371 115h1M376 115h1M382 115h1M101 116h2M106 116h1M370 116h1M375 116h1M380 116h2M385 116h1M93 117h1M103 117h1M107 117h1M374 117h1M379 117h1M384 117h1M94 118h1M104 118h1M373 118h1M378 118h1M382 118h2M91 119h1M95 119h1M105 119h1M372 119h1M376 119h2M381 119h1M92 120h1M96 120h1M375 120h1M380 120h1M93 121h1M97 121h2M374 121h1M378 121h2M89 122h1M94 122h1M99 122h1M377 122h1M389 122h1M90 123h1M95 123h2M100 123h1M376 123h1M387 123h2M91 124h1M97 124h1M101 124h1M386 124h1M391 124h1M87 125h1M92 125h1M98 125h1M384 125h2M390 125h1M88 126h1M93 126h2M99 126h1M383 126h1M388 126h2M89 127h2M95 127h1M381 127h2M387 127h1M393 127h1M91 128h1M96 128h1M380 128h1M386 128h1M391 128h2M92 129h1M97 129h1M384 129h2M390 129h1M83 130h1M93 130h2M383 130h1M388 130h2M395 130h1M84 131h2M95 131h1M382 131h1M387 131h1M393 131h2M86 132h1M385 132h2M392 132h1M81 133h1M87 133h2M384 133h1M390 133h2M82 134h2M89 134h1M389 134h1M84 135h1M90 135h2M387 135h2M399 135h1M79 136h1M85 136h2M92 136h1M386 136h1M397 136h2M80 137h2M87 137h1M396 137h1M77 138h1M82 138h1M88 138h2M394 138h2M400 138h1M78 139h2M83 139h2M90 139h1M393 139h1M398 139h2M80 140h1M85 140h1M391 140h2M397 140h1M81 141h2M86 141h2M390 141h1M395 141h2M402 141h1M83 142h1M88 142h1M394 142h1M400 142h2M84 143h2M392 143h2M398 143h2M74 144h1M86 144h1M391 144h1M396 144h2M404 144h1M75 145h2M394 145h2M402 145h2M77 146h1M393 146h1M400 146h2M72 147h1M78 147h2M398 147h2M73 148h2M80 148h1M396 148h2M75 149h2M81 149h2M395 149h1M407 149h1M71 150h1M77 150h2M83 150h1M405 150h2M72 151h2M79 151h2M404 151h1M74 152h2M81 152h2M402 152h2M408 152h2M69 153h1M76 153h2M401 153h1M406 153h2M70 154h2M78 154h2M399 154h2M404 154h2M72 155h2M80 155h1M398 155h1M402 155h2M409 155h2M74 156h2M400 156h2M407 156h2M76 157h2M399 157h1M405 157h2M78 158h2M403 158h2M411 158h2M66 159h1M401 159h2M409 159h2M67 160h2M400 160h1M407 160h2M69 161h2M405 161h2M65 162h2M71 162h2M403 162h2M67 163h2M73 163h2M402 163h1M69 164h3M75 164h2M63 165h2M72 165h2M413 165h2M65 166h2M74 166h2M411 166h2M67 167h3M408 167h3M62 168h2M70 168h2M406 168h2M415 168h2M64 169h2M72 169h2M404 169h2M413 169h2M66 170h3M410 170h3M69 171h2M408 171h2M416 171h2M71 172h2M406 172h2M414 172h2M411 173h3M60 174h2M409 174h2M417 174h2M62 175h2M407 175h2M415 175h2M64 176h3M412 176h3M67 177h2M410 177h2M59 178h2M69 178h2M408 178h2M61 179h3M64 180h4M419 180h2M58 181h2M68 181h2M417 181h2M60 182h3M414 182h3M63 183h4M412 183h2M420 183h2M57 184h2M67 184h2M410 184h2M418 184h2M59 185h3M415 185h3M62 186h4M413 186h2M66 187h2M411 187h2M421 187h2M417 188h4M414 189h3M55 190h2M412 190h2M422 190h2M57 191h3M418 191h4M60 192h4M415 192h3M64 193h2M413 193h2M54 194h3M57 195h5M62 196h3M424 196h2M53 197h3M420 197h4M56 198h6M416 198h4M62 199h3M414 199h2M424 199h2M52 200h3M420 200h4M55 201h6M417 201h3M61 202h3M415 202h2M424 203h3M418 204h6M415 205h3M425 206h3M51 207h6M419 207h6M57 208h6M416 208h3M51 210h3M54 211h5M59 212h3M50 213h3M423 213h6M53 214h6M417 214h6M59 215h3M50 216h3M423 216h6M53 217h6M417 217h6M59 218h3M424 219h6M418 220h6M49 223h6M424 223h6M55 224h6M418 224h6M49 226h6M55 227h6M424 229h6M49 230h11M419 230h5M48 233h12M419 233h12M419 236h12M48 239h12M419 239h12M48 242h12M48 245h12M419 245h12M54 248h6M419 248h11M49 249h5M418 251h6M424 252h6M55 254h6M418 254h6M49 255h6M424 255h6M55 258h6M49 259h6M417 260h3M56 261h6M420 261h6M50 262h6M426 262h3M417 263h3M56 264h6M420 264h6M50 265h6M426 265h3M417 266h3M420 267h5M425 268h3M60 270h3M416 270h6M54 271h6M422 271h6M51 272h3M61 273h3M55 274h6M52 275h3M62 276h2M415 276h3M58 277h4M418 277h6M55 278h3M424 278h3M53 279h2M63 279h2M414 279h3M59 280h4M417 280h6M55 281h4M423 281h3M53 282h2M414 282h3M417 283h5M422 284h3M64 285h2M413 285h2M60 286h4M415 286h3M57 287h3M418 287h4M55 288h2M65 288h2M422 288h2M61 289h4M58 290h3M56 291h2M66 291h2M411 291h2M64 292h2M413 292h3M61 293h3M416 293h4M59 294h2M67 294h2M410 294h2M420 294h2M57 295h2M65 295h2M412 295h3M62 296h3M415 296h4M60 297h2M409 297h2M419 297h2M58 298h2M411 298h3M414 299h4M69 300h2M408 300h2M418 300h2M67 301h2M410 301h2M64 302h3M412 302h3M62 303h2M70 303h2M415 303h2M60 304h2M68 304h2M417 304h2M65 305h3M63 306h2M71 306h2M406 306h2M61 307h2M69 307h2M408 307h2M66 308h3M410 308h3M64 309h2M73 309h2M405 309h2M413 309h2M62 310h2M71 310h2M407 310h2M415 310h2M68 311h3M409 311h3M66 312h2M403 312h2M412 312h2M64 313h2M405 313h2M414 313h2M402 314h1M407 314h3M75 315h2M403 315h2M410 315h2M73 316h2M405 316h2M412 316h2M71 317h2M407 317h2M69 318h2M77 318h2M409 318h2M67 319h2M75 319h2M411 319h2M66 320h1M73 320h2M399 320h1M71 321h2M78 321h2M400 321h2M69 322h2M76 322h2M402 322h2M68 323h1M74 323h2M80 323h1M398 323h1M404 323h2M72 324h2M78 324h2M399 324h2M406 324h2M70 325h2M77 325h1M401 325h2M408 325h2M69 326h1M75 326h2M396 326h1M403 326h2M74 327h1M397 327h2M405 327h2M72 328h2M395 328h1M399 328h2M407 328h1M71 329h1M83 329h1M396 329h2M401 329h2M81 330h2M398 330h1M403 330h2M79 331h2M399 331h2M405 331h2M77 332h2M85 332h1M401 332h1M75 333h2M83 333h2M402 333h2M74 334h1M81 334h2M87 334h1M392 334h1M404 334h1M79 335h2M85 335h2M393 335h2M77 336h2M84 336h1M390 336h1M395 336h1M76 337h1M82 337h2M88 337h1M391 337h2M396 337h2M81 338h1M86 338h2M393 338h1M398 338h1M79 339h2M85 339h1M388 339h1M394 339h2M399 339h2M78 340h1M83 340h2M389 340h2M396 340h1M401 340h1M82 341h1M391 341h1M397 341h2M80 342h2M92 342h1M386 342h1M392 342h2M399 342h1M79 343h1M90 343h2M387 343h2M394 343h1M89 344h1M389 344h1M395 344h2M87 345h2M94 345h1M390 345h2M397 345h1M86 346h1M92 346h2M392 346h1M84 347h2M91 347h1M96 347h1M383 347h1M393 347h2M83 348h1M89 348h2M95 348h1M384 348h1M395 348h1M88 349h1M93 349h2M381 349h1M385 349h2M86 350h2M92 350h1M98 350h1M382 350h1M387 350h1M85 351h1M91 351h1M96 351h2M383 351h1M388 351h1M89 352h2M95 352h1M379 352h1M384 352h1M389 352h2M88 353h1M93 353h2M380 353h1M385 353h2M391 353h1M87 354h1M92 354h1M377 354h1M381 354h1M387 354h1M90 355h2M102 355h1M378 355h1M382 355h1M388 355h1M89 356h1M101 356h1M379 356h1M383 356h2M389 356h1M99 357h2M104 357h1M380 357h1M385 357h1M98 358h1M103 358h1M381 358h2M386 358h1M97 359h1M101 359h2M106 359h1M373 359h1M383 359h1M387 359h1M95 360h2M100 360h1M105 360h1M374 360h1M384 360h1M94 361h1M99 361h1M104 361h1M371 361h1M375 361h1M385 361h1M93 362h1M97 362h2M103 362h1M108 362h1M372 362h1M376 362h1M96 363h1M102 363h1M107 363h1M373 363h1M377 363h2M95 364h1M101 364h1M106 364h1M368 364h1M374 364h1M379 364h1M100 365h1M104 365h2M369 365h1M375 365h1M380 365h1M99 366h1M103 366h1M112 366h1M366 366h1M370 366h1M376 366h1M381 366h1M98 367h1M102 367h1M111 367h1M367 367h1M371 367h1M377 367h1M101 368h1M110 368h1M114 368h1M368 368h1M372 368h2M378 368h1M100 369h1M109 369h1M113 369h1M369 369h1M374 369h1M379 369h1M108 370h1M112 370h1M362 370h1M370 370h1M375 370h1M107 371h1M111 371h1M117 371h1M363 371h1M371 371h1M376 371h1M106 372h1M110 372h1M116 372h1M359 372h1M364 372h1M372 372h1M105 373h1M110 373h1M115 373h1M119 373h1M360 373h1M365 373h1M373 373h1M104 374h1M109 374h1M114 374h1M118 374h1M357 374h1M361 374h1M366 374h1M374 374h1M108 375h1M113 375h1M117 375h1M358 375h1M362 375h1M366 375h1M107 376h1M112 376h1M116 376h1M355 376h1M359 376h1M363 376h1M367 376h1M111 377h1M115 377h1M124 377h1M356 377h1M359 377h1M364 377h1M368 377h1M110 378h1M115 378h1M123 378h1M357 378h1M360 378h1M365 378h1M369 378h1M109 379h1M114 379h1M122 379h1M126 379h1M357 379h1M361 379h1M366 379h1M113 380h1M121 380h1M125 380h1M350 380h1M358 380h1M362 380h1M367 380h1M112 381h1M120 381h1M124 381h1M129 381h1M351 381h1M359 381h1M362 381h1M120 382h1M123 382h1M128 382h1M347 382h1M351 382h1M360 382h1M363 382h1M119 383h1M122 383h1M127 383h1M131 383h1M348 383h1M352 383h1M360 383h1M364 383h1M118 384h1M122 384h1M126 384h1M130 384h1M345 384h1M349 384h1M353 384h1M361 384h1M117 385h1M121 385h1M125 385h1M129 385h1M346 385h1M349 385h1M353 385h1M362 385h1M120 386h1M125 386h1M129 386h1M136 386h1M342 386h1M346 386h1M350 386h1M354 386h1M119 387h1M124 387h1M128 387h1M135 387h1M343 387h1M347 387h1M351 387h1M355 387h1M123 388h1M127 388h1M135 388h1M139 388h1M343 388h1M348 388h1M352 388h1M355 388h1M122 389h1M126 389h1M134 389h1M138 389h1M344 389h1M348 389h1M352 389h1M356 389h1M126 390h1M133 390h1M138 390h1M142 390h1M337 390h1M345 390h1M349 390h1M353 390h1M125 391h1M133 391h1M137 391h1M141 391h1M334 391h1M338 391h1M345 391h1M350 391h1M354 391h1M132 392h1M136 392h1M141 392h1M144 392h1M335 392h1M338 392h1M346 392h1M350 392h1M131 393h1M136 393h1M140 393h1M143 393h1M332 393h1M335 393h1M339 393h1M347 393h1M351 393h1M131 394h1M135 394h1M139 394h1M143 394h1M333 394h1M336 394h1M340 394h1M347 394h1M130 395h1M134 395h1M139 395h1M142 395h1M150 395h1M329 395h1M333 395h1M337 395h1M340 395h1M348 395h1M134 396h1M138 396h1M141 396h1M149 396h1M152 396h1M330 396h1M334 396h1M337 396h1M341 396h1M133 397h1M137 397h1M141 397h1M149 397h1M151 397h1M330 397h1M334 397h1M338 397h1M342 397h1M137 398h1M140 398h1M148 398h1M151 398h1M155 398h1M323 398h1M331 398h1M335 398h1M339 398h1M342 398h1M136 399h1M139 399h1M147 399h1M150 399h1M154 399h1M158 399h1M321 399h1M324 399h1M331 399h1M335 399h1M339 399h1M343 399h1M139 400h1M147 400h1M150 400h1M154 400h1M157 400h1M318 400h1M322 400h1M324 400h1M332 400h1M336 400h1M340 400h1M138 401h1M146 401h1M149 401h1M153 401h1M157 401h1M319 401h1M322 401h1M325 401h1M332 401h1M336 401h1M145 402h1M149 402h1M153 402h1M156 402h1M164 402h1M315 402h1M319 402h1M323 402h1M326 402h1M333 402h1M337 402h1M145 403h1M148 403h1M152 403h1M156 403h1M163 403h1M166 403h1M316 403h1M320 403h1M323 403h1M326 403h1M333 403h1M144 404h1M148 404h1M152 404h1M155 404h1M163 404h1M166 404h1M309 404h1M316 404h1M320 404h1M324 404h1M327 404h1M334 404h1M147 405h1M151 405h1M155 405h1M162 405h1M165 405h1M169 405h1M309 405h1M317 405h1M321 405h1M324 405h1M328 405h1M147 406h1M151 406h1M154 406h1M162 406h1M165 406h1M169 406h1M172 406h1M306 406h1M310 406h1M317 406h1M321 406h1M325 406h1M328 406h1M150 407h1M154 407h1M161 407h1M164 407h1M168 407h1M172 407h1M303 407h1M306 407h1M310 407h1M318 407h1M322 407h1M325 407h1M329 407h1M153 408h1M161 408h1M164 408h1M168 408h1M171 408h1M178 408h1M300 408h1M303 408h1M307 408h1M311 408h1M318 408h1M322 408h1M326 408h1M153 409h1M160 409h1M164 409h1M167 409h1M171 409h1M178 409h1M181 409h1M300 409h1M304 409h1M307 409h1M311 409h1M319 409h1M323 409h1M326 409h1M160 410h1M163 410h1M167 410h1M170 410h1M177 410h1M181 410h1M184 410h1M294 410h1M301 410h1M304 410h1M308 410h1M311 410h1M319 410h1M323 410h1M159 411h1M163 411h1M167 411h1M170 411h1M177 411h1M180 411h1M184 411h1M187 411h1M291 411h1M294 411h1M301 411h1M305 411h1M308 411h1M312 411h1M320 411h1M159 412h1M162 412h1M166 412h1M170 412h1M176 412h1M180 412h1M183 412h1M187 412h1M288 412h1M291 412h1M295 412h1M302 412h1M305 412h1M308 412h1M312 412h1M320 412h1M162 413h1M166 413h1M169 413h1M176 413h1M180 413h1M183 413h1M186 413h1M193 413h1M285 413h1M288 413h1M292 413h1M295 413h1M302 413h1M305 413h1M309 413h1M313 413h1M165 414h1M169 414h1M176 414h1M179 414h1M183 414h1M186 414h1M193 414h1M196 414h1M199 414h1M279 414h1M285 414h1M289 414h1M292 414h1M296 414h1M302 414h1M306 414h1M309 414h1M313 414h1M165 415h1M168 415h1M175 415h1M179 415h1M182 415h1M186 415h1M192 415h1M196 415h1M199 415h1M202 415h1M273 415h1M276 415h1M279 415h1M286 415h1M289 415h1M293 415h1M296 415h1M303 415h1M306 415h1M310 415h1M168 416h1M175 416h1M179 416h1M182 416h1M185 416h1M192 416h1M196 416h1M199 416h1M202 416h1M208 416h1M270 416h1M273 416h1M276 416h1M280 416h1M286 416h1M289 416h1M293 416h1M296 416h1M303 416h1M307 416h1M310 416h1M174 417h1M179 417h1M182 417h1M185 417h1M192 417h1M195 417h1M198 417h1M202 417h1M208 417h1M212 417h1M215 417h1M218 417h1M261 417h1M264 417h1M270 417h1M273 417h1M277 417h1M280 417h1M286 417h1M290 417h1M293 417h1M297 417h1M304 417h1M307 417h1M174 418h1M178 418h1M182 418h1M185 418h1M191 418h1M195 418h1M198 418h1M201 418h1M208 418h1M212 418h1M215 418h1M218 418h1M224 418h1M227 418h1M254 418h1M258 418h1M261 418h1M264 418h1M270 418h1M274 418h1M277 418h1M280 418h1M287 418h1M290 418h1M294 418h1M297 418h1M304 418h1M178 419h1M181 419h1M185 419h1M191 419h1M195 419h1M198 419h1M201 419h1M208 419h1M212 419h1M215 419h1M218 419h1M224 419h1M227 419h1M230 419h1M233 419h1M239 419h1M242 419h1M245 419h1M248 419h1M254 419h1M258 419h1M261 419h1M264 419h1M271 419h1M274 419h1M277 419h1M280 419h1M287 419h1M290 419h1M294 419h1M298 419h1M181 420h1M184 420h1M191 420h1M195 420h1M198 420h1M201 420h1M208 420h1M211 420h1M214 420h1M217 420h1M224 420h1M227 420h1M230 420h1M233 420h1M239 420h1M242 420h1M245 420h1M248 420h1M254 420h1M258 420h1M261 420h1M264 420h1M271 420h1M274 420h1M278 420h1M281 420h1M287 420h1M290 420h1M295 420h1M298 420h1M184 421h1M191 421h1M195 421h1M198 421h1M201 421h1M208 421h1M211 421h1M214 421h1M217 421h1M224 421h1M227 421h1M230 421h1M233 421h1M239 421h1M242 421h1M245 421h1M248 421h1M254 421h1M258 421h1M261 421h1M264 421h1M271 421h1M274 421h1M278 421h1M281 421h1M287 421h1M291 421h1M295 421h1M190 422h1M194 422h1M198 422h1M201 422h1M207 422h1M211 422h1M214 422h1M217 422h1M224 422h1M227 422h1M230 422h1M233 422h1M239 422h1M242 422h1M245 422h1M248 422h1M254 422h1M258 422h1M261 422h1M264 422h1M271 422h1M274 422h1M278 422h1M281 422h1M288 422h1M291 422h1M190 423h1M194 423h1M197 423h1M201 423h1M207 423h1M211 423h1M214 423h1M217 423h1M224 423h1M227 423h1M230 423h1M233 423h1M239 423h1M242 423h1M245 423h1M248 423h1M254 423h1M258 423h1M262 423h1M265 423h1M271 423h1M274 423h1M278 423h1M281 423h1M288 423h1M194 424h1M197 424h1M200 424h1M207 424h1M211 424h1M214 424h1M217 424h1M223 424h1M226 424h1M230 424h1M233 424h1M239 424h1M242 424h1M245 424h1M249 424h1M255 424h1M259 424h1M262 424h1M265 424h1M271 424h1M275 424h1M279 424h1M282 424h1M197 425h1M200 425h1M207 425h1M210 425h1M214 425h1M217 425h1M223 425h1M226 425h1M230 425h1M233 425h1M239 425h1M242 425h1M245 425h1M249 425h1M255 425h1M259 425h1M262 425h1M265 425h1M272 425h1M275 425h1M279 425h1M282 425h1M200 426h1M207 426h1M210 426h1M213 426h1M216 426h1M223 426h1M226 426h1M230 426h1M233 426h1M239 426h1M242 426h1M245 426h1M249 426h1M255 426h1M259 426h1M262 426h1M265 426h1M272 426h1M275 426h1M207 427h1M210 427h1M213 427h1M216 427h1M223 427h1M226 427h1M230 427h1M233 427h1M239 427h1M242 427h1M245 427h1M249 427h1M255 427h1M259 427h1M262 427h1M265 427h1M272 427h1M213 428h1M216 428h1M223 428h1M226 428h1M230 428h1M233 428h1M239 428h1M242 428h1M245 428h1M249 428h1M255 428h1M259 428h1M262 428h1M265 428h1M223 429h1M226 429h1M230 429h1M233 429h1M239 429h1M242 429h1M245 429h1M249 429h1M255 429h1M259 429h1M233 430h1M239 430h1M242 430h1M245 430h1"/></g>
<g id="rings"><path stroke="#ffffff" d="M228 12h22M212 13h16M250 13h16M204 14h8M266 14h8M198 15h6M274 15h6M194 16h4M280 16h4M190 17h4M284 17h4M186 18h4M288 18h4M183 19h3M292 19h4M179 20h4M296 20h4M175 21h4M300 21h3M171 22h4M303 22h4M168 23h3M307 23h4M166 24h2M311 24h2M164 25h2M313 25h2M161 26h3M315 26h3M158 27h3M318 27h2M156 28h2M320 28h3M153 29h3M323 29h3M151 30h2M326 30h2M149 31h2M328 31h2M146 32h3M330 32h3M144 33h2M333 33h2M142 34h2M335 34h2M140 35h2M337 35h2M138 36h2M339 36h2M136 37h2M341 37h2M134 38h2M343 38h2M132 39h2M345 39h2M130 40h2M347 40h2M128 41h2M349 41h2M126 42h2M351 42h2M124 43h2M353 43h2M123 44h1M355 44h1M122 45h1M356 45h1M120 46h2M357 46h2M119 47h1M359 47h1M117 48h2M223 48h33M360 48h2M115 49h2M216 49h7M256 49h6M362 49h2M113 50h2M210 50h6M262 50h7M364 50h2M112 51h1M203 51h7M269 51h6M366 51h1M110 52h2M199 52h4M275 52h5M367 52h2M109 53h1M195 53h4M280 53h4M369 53h1M107 54h2M190 54h5M284 54h4M370 54h2M106 55h1M186 55h4M288 55h5M372 55h1M104 56h2M182 56h4M293 56h4M373 56h2M103 57h1M179 57h3M297 57h2M375 57h1M102 58h1M177 58h2M299 58h2M376 58h1M100 59h2M175 59h2M301 59h2M377 59h2M99 60h1M173 60h2M224 60h30M303 60h3M379 60h1M98 61h1M170 61h3M218 61h6M254 61h6M306 61h3M380 61h1M96 62h2M167 62h3M212 62h6M260 62h7M309 62h2M381 62h1M95 63h1M165 63h2M205 63h7M267 63h6M311 63h2M382 63h2M94 64h1M163 64h2M199 64h6M273 64h6M313 64h2M384 64h1M93 65h1M161 65h2M195 65h4M279 65h5M315 65h3M385 65h1M92 66h1M158 66h3M192 66h3M284 66h3M318 66h3M386 66h1M90 67h2M155 67h3M189 67h3M287 67h3M321 67h2M387 67h1M89 68h1M153 68h2M186 68h3M290 68h3M323 68h2M388 68h2M88 69h1M151 69h2M183 69h3M293 69h3M325 69h2M390 69h1M87 70h1M150 70h1M180 70h3M296 70h3M327 70h2M391 70h1M86 71h1M148 71h2M177 71h3M299 71h3M329 71h2M392 71h1M85 72h1M147 72h1M174 72h3M302 72h3M331 72h1M393 72h1M84 73h1M145 73h2M171 73h3M305 73h2M332 73h2M394 73h1M83 74h1M143 74h2M169 74h2M307 74h2M334 74h1M395 74h1M82 75h1M141 75h2M167 75h2M309 75h2M335 75h2M396 75h1M81 76h1M139 76h2M165 76h2M311 76h3M337 76h2M397 76h1M80 77h1M138 77h1M163 77h2M314 77h2M339 77h2M398 77h1M79 78h1M136 78h2M160 78h3M316 78h2M341 78h2M399 78h1M78 79h1M135 79h1M158 79h2M318 79h2M343 79h1M400 79h1M77 80h1M133 80h2M156 80h2M320 80h2M344 80h2M401 80h1M76 81h1M132 81h1M155 81h1M322 81h2M346 81h1M402 81h1M75 82h1M131 82h1M153 82h2M324 82h2M347 82h1M403 82h1M74 83h1M129 83h2M151 83h2M326 83h2M348 83h2M404 83h1M73 84h1M128 84h1M149 84h2M226 84h26M328 84h1M350 84h1M405 84h1M72 85h1M127 85h1M147 85h2M221 85h5M252 85h6M329 85h2M351 85h1M406 85h1M71 86h1M126 86h1M145 86h2M210 86h11M258 86h11M331 86h2M352 86h1M407 86h1M70 87h1M124 87h2M144 87h1M206 87h4M269 87h4M333 87h2M353 87h2M408 87h1M69 88h1M123 88h1M143 88h1M204 88h2M273 88h2M335 88h1M355 88h1M409 88h1M68 89h1M122 89h1M141 89h2M200 89h4M275 89h4M336 89h2M356 89h1M410 89h1M67 90h1M120 90h2M140 90h1M196 90h4M279 90h4M338 90h1M357 90h2M411 90h1M67 91h1M119 91h1M139 91h1M193 91h3M283 91h3M339 91h1M359 91h1M411 91h1M66 92h1M117 92h2M137 92h2M189 92h4M286 92h4M340 92h2M360 92h2M412 92h1M65 93h1M116 93h1M135 93h2M185 93h4M290 93h4M342 93h2M362 93h1M413 93h1M64 94h1M115 94h1M134 94h1M183 94h2M294 94h2M344 94h1M363 94h1M414 94h1M63 95h1M113 95h2M133 95h1M180 95h3M296 95h3M345 95h1M364 95h2M415 95h1M62 96h1M112 96h1M131 96h2M178 96h2M299 96h2M346 96h2M366 96h1M416 96h1M62 97h1M111 97h1M130 97h1M176 97h2M301 97h2M348 97h1M367 97h1M416 97h1M61 98h1M110 98h1M129 98h1M174 98h2M303 98h2M349 98h1M368 98h1M417 98h1M60 99h1M109 99h1M128 99h1M172 99h2M305 99h2M350 99h1M369 99h1M418 99h1M59 100h1M108 100h1M126 100h2M170 100h2M307 100h2M351 100h2M370 100h1M419 100h1M59 101h1M107 101h1M125 101h1M168 101h2M309 101h2M353 101h1M371 101h1M419 101h1M58 102h1M106 102h1M124 102h1M166 102h2M311 102h2M354 102h1M372 102h1M420 102h1M57 103h1M105 103h1M123 103h1M164 103h2M313 103h1M355 103h1M373 103h1M421 103h1M56 104h1M104 104h1M121 104h2M163 104h1M314 104h2M356 104h2M374 104h1M422 104h1M56 105h1M103 105h1M120 105h1M162 105h1M316 105h1M358 105h1M375 105h1M422 105h1M55 106h1M102 106h1M119 106h1M160 106h2M317 106h2M359 106h1M376 106h1M423 106h1M54 107h1M101 107h1M118 107h1M158 107h2M319 107h2M360 107h1M377 107h1M424 107h1M54 108h1M100 108h1M117 108h1M157 108h1M321 108h1M361 108h1M378 108h1M424 108h1M53 109h1M99 109h1M116 109h1M155 109h2M322 109h1M362 109h1M379 109h1M425 109h1M52 110h1M98 110h1M115 110h1M154 110h1M323 110h2M363 110h1M380 110h1M426 110h1M52 111h1M97 111h1M114 111h1M153 111h1M325 111h1M364 111h1M381 111h1M426 111h1M51 112h1M96 112h1M113 112h1M151 112h2M326 112h2M365 112h1M382 112h1M427 112h1M50 113h1M95 113h1M112 113h1M149 113h2M328 113h2M366 113h1M383 113h1M428 113h1M50 114h1M95 114h1M111 114h1M148 114h1M330 114h1M367 114h1M383 114h1M428 114h1M49 115h1M94 115h1M110 115h1M146 115h2M331 115h1M368 115h1M384 115h1M429 115h1M49 116h1M93 116h1M109 116h1M145 116h1M332 116h2M369 116h1M385 116h1M429 116h1M48 117h1M92 117h1M108 117h1M144 117h1M334 117h1M370 117h1M386 117h1M430 117h1M48 118h1M92 118h1M107 118h1M142 118h2M335 118h1M371 118h1M386 118h1M430 118h1M47 119h1M91 119h1M106 119h1M141 119h1M336 119h2M372 119h1M387 119h1M431 119h1M46 120h1M90 120h1M105 120h1M140 120h1M338 120h1M373 120h1M388 120h1M432 120h1M46 121h1M90 121h1M104 121h1M139 121h1M339 121h1M374 121h1M388 121h1M432 121h1M45 122h1M89 122h1M104 122h1M137 122h2M340 122h2M374 122h1M389 122h1M433 122h1M44 123h1M88 123h1M103 123h1M136 123h1M342 123h1M375 123h1M390 123h1M434 123h1M43 124h1M87 124h1M102 124h1M135 124h1M343 124h1M376 124h1M391 124h1M435 124h1M43 125h1M87 125h1M101 125h1M134 125h1M344 125h1M377 125h1M391 125h1M435 125h1M42 126h1M86 126h1M100 126h1M133 126h1M345 126h1M378 126h1M392 126h1M436 126h1M42 127h1M85 127h1M100 127h1M132 127h1M346 127h1M378 127h1M393 127h1M436 127h1M41 128h1M84 128h1M99 128h1M131 128h1M347 128h1M379 128h1M394 128h1M437 128h1M41 129h1M83 129h1M98 129h1M130 129h1M348 129h1M380 129h1M395 129h1M437 129h1M40 130h1M83 130h1M97 130h1M129 130h1M349 130h1M381 130h1M395 130h1M438 130h1M40 131h1M82 131h1M96 131h1M128 131h1M350 131h1M382 131h1M396 131h1M438 131h1M39 132h1M81 132h1M96 132h1M127 132h1M351 132h1M382 132h1M397 132h1M439 132h1M39 133h1M80 133h1M95 133h1M126 133h1M352 133h1M383 133h1M398 133h1M439 133h1M38 134h1M80 134h1M94 134h1M125 134h1M353 134h1M384 134h1M398 134h1M440 134h1M38 135h1M79 135h1M93 135h1M124 135h1M354 135h1M385 135h1M399 135h1M440 135h1M37 136h1M78 136h1M93 136h1M123 136h1M355 136h1M385 136h1M400 136h1M441 136h1M37 137h1M78 137h1M92 137h1M122 137h1M356 137h1M386 137h1M400 137h1M441 137h1M36 138h1M77 138h1M92 138h1M122 138h1M356 138h1M386 138h1M401 138h1M442 138h1M36 139h1M76 139h1M91 139h1M121 139h1M357 139h1M387 139h1M402 139h1M442 139h1M35 140h1M76 140h1M90 140h1M120 140h1M358 140h1M388 140h1M402 140h1M443 140h1M35 141h1M75 141h1M89 141h1M119 141h1M359 141h1M389 141h1M403 141h1M443 141h1M34 142h1M75 142h1M89 142h1M118 142h1M360 142h1M389 142h1M403 142h1M444 142h1M34 143h1M74 143h1M88 143h1M118 143h1M360 143h1M390 143h1M404 143h1M444 143h1M33 144h1M74 144h1M87 144h1M117 144h1M361 144h1M391 144h1M404 144h1M445 144h1M33 145h1M73 145h1M86 145h1M116 145h1M362 145h1M392 145h1M405 145h1M445 145h1M32 146h1M73 146h1M86 146h1M115 146h1M363 146h1M392 146h1M405 146h1M446 146h1M32 147h1M72 147h1M85 147h1M115 147h1M363 147h1M393 147h1M406 147h1M446 147h1M32 148h1M71 148h1M85 148h1M114 148h1M364 148h1M393 148h1M407 148h1M446 148h1M31 149h1M71 149h1M84 149h1M113 149h1M365 149h1M394 149h1M407 149h1M447 149h1M31 150h1M70 150h1M84 150h1M113 150h1M365 150h1M394 150h1M408 150h1M447 150h1M30 151h1M69 151h1M83 151h1M112 151h1M366 151h1M395 151h1M409 151h1M448 151h1M30 152h1M69 152h1M83 152h1M112 152h1M366 152h1M395 152h1M409 152h1M448 152h1M29 153h1M68 153h1M82 153h1M111 153h1M367 153h1M396 153h1M410 153h1M449 153h1M29 154h1M68 154h1M82 154h1M110 154h1M368 154h1M396 154h1M410 154h1M449 154h1M29 155h1M67 155h1M81 155h1M109 155h1M369 155h1M397 155h1M411 155h1M449 155h1M28 156h1M67 156h1M80 156h1M109 156h1M369 156h1M398 156h1M411 156h1M450 156h1M28 157h1M67 157h1M80 157h1M108 157h1M370 157h1M398 157h1M411 157h1M450 157h1M27 158h1M66 158h1M79 158h1M107 158h1M371 158h1M399 158h1M412 158h1M451 158h1M27 159h1M66 159h1M79 159h1M107 159h1M371 159h1M399 159h1M412 159h1M451 159h1M27 160h1M66 160h1M78 160h1M106 160h1M372 160h1M400 160h1M412 160h1M451 160h1M26 161h1M65 161h1M78 161h1M106 161h1M372 161h1M400 161h1M413 161h1M452 161h1M26 162h1M65 162h1M78 162h1M105 162h1M373 162h1M400 162h1M413 162h1M452 162h1M26 163h1M64 163h1M77 163h1M104 163h1M374 163h1M401 163h1M414 163h1M452 163h1M25 164h1M64 164h1M77 164h1M103 164h1M375 164h1M401 164h1M414 164h1M453 164h1M25 165h1M63 165h1M76 165h1M103 165h1M375 165h1M402 165h1M415 165h1M453 165h1M24 166h1M63 166h1M76 166h1M102 166h1M376 166h1M402 166h1M415 166h1M454 166h1M24 167h1M62 167h1M75 167h1M102 167h1M376 167h1M403 167h1M416 167h1M454 167h1M23 168h1M62 168h1M75 168h1M101 168h1M377 168h1M403 168h1M416 168h1M455 168h1M23 169h1M62 169h1M74 169h1M101 169h1M377 169h1M404 169h1M416 169h1M455 169h1M23 170h1M61 170h1M74 170h1M100 170h1M378 170h1M404 170h1M417 170h1M455 170h1M22 171h1M61 171h1M73 171h1M100 171h1M378 171h1M405 171h1M417 171h1M456 171h1M22 172h1M61 172h1M73 172h1M99 172h1M379 172h1M405 172h1M417 172h1M456 172h1M22 173h1M60 173h1M73 173h1M99 173h1M379 173h1M405 173h1M418 173h1M456 173h1M22 174h1M60 174h1M72 174h1M98 174h1M380 174h1M406 174h1M418 174h1M456 174h1M21 175h1M59 175h1M72 175h1M98 175h1M380 175h1M406 175h1M419 175h1M457 175h1M21 176h1M59 176h1M72 176h1M97 176h1M381 176h1M406 176h1M419 176h1M457 176h1M21 177h1M58 177h1M71 177h1M97 177h1M381 177h1M407 177h1M420 177h1M457 177h1M21 178h1M58 178h1M71 178h1M96 178h1M382 178h1M407 178h1M420 178h1M457 178h1M20 179h1M57 179h1M71 179h1M96 179h1M382 179h1M407 179h1M421 179h1M458 179h1M20 180h1M57 180h1M70 180h1M95 180h1M383 180h1M408 180h1M421 180h1M458 180h1M20 181h1M57 181h1M70 181h1M95 181h1M383 181h1M408 181h1M421 181h1M458 181h1M20 182h1M56 182h1M70 182h1M95 182h1M383 182h1M408 182h1M422 182h1M458 182h1M19 183h1M56 183h1M69 183h1M94 183h1M384 183h1M409 183h1M422 183h1M459 183h1M19 184h1M56 184h1M69 184h1M94 184h1M384 184h1M409 184h1M422 184h1M459 184h1M19 185h1M56 185h1M69 185h1M93 185h1M385 185h1M409 185h1M422 185h1M459 185h1M18 186h1M55 186h1M68 186h1M93 186h1M385 186h1M410 186h1M423 186h1M460 186h1M18 187h1M55 187h1M68 187h1M93 187h1M385 187h1M410 187h1M423 187h1M460 187h1M18 188h1M55 188h1M68 188h1M93 188h1M385 188h1M410 188h1M423 188h1M460 188h1M18 189h1M55 189h1M67 189h1M92 189h1M386 189h1M411 189h1M423 189h1M460 189h1M17 190h1M54 190h1M67 190h1M92 190h1M386 190h1M411 190h1M424 190h1M461 190h1M17 191h1M54 191h1M67 191h1M92 191h1M386 191h1M411 191h1M424 191h1M461 191h1M17 192h1M54 192h1M66 192h1M92 192h1M386 192h1M412 192h1M424 192h1M461 192h1M17 193h1M54 193h1M66 193h1M91 193h1M387 193h1M412 193h1M424 193h1M461 193h1M16 194h1M54 194h1M66 194h1M91 194h1M387 194h1M412 194h1M424 194h1M462 194h1M16 195h1M53 195h1M65 195h1M91 195h1M387 195h1M413 195h1M425 195h1M462 195h1M16 196h1M53 196h1M65 196h1M90 196h1M388 196h1M413 196h1M425 196h1M462 196h1M16 197h1M53 197h1M65 197h1M90 197h1M388 197h1M413 197h1M425 197h1M462 197h1M15 198h1M53 198h1M65 198h1M90 198h1M388 198h1M413 198h1M425 198h1M463 198h1M15 199h1M52 199h1M64 199h1M90 199h1M388 199h1M414 199h1M426 199h1M463 199h1M15 200h1M52 200h1M64 200h1M89 200h1M389 200h1M414 200h1M426 200h1M463 200h1M15 201h1M52 201h1M64 201h1M89 201h1M389 201h1M414 201h1M426 201h1M463 201h1M15 202h1M52 202h1M64 202h1M89 202h1M389 202h1M414 202h1M426 202h1M463 202h1M15 203h1M51 203h1M64 203h1M89 203h1M389 203h1M414 203h1M427 203h1M463 203h1M14 204h1M51 204h1M64 204h1M88 204h1M390 204h1M414 204h1M427 204h1M464 204h1M14 205h1M51 205h1M63 205h1M88 205h1M390 205h1M415 205h1M427 205h1M464 205h1M14 206h1M51 206h1M63 206h1M87 206h1M391 206h1M415 206h1M427 206h1M464 206h1M14 207h1M51 207h1M63 207h1M87 207h1M391 207h1M415 207h1M427 207h1M464 207h1M14 208h1M51 208h1M63 208h1M87 208h1M391 208h1M415 208h1M427 208h1M464 208h1M14 209h1M51 209h1M63 209h1M87 209h1M391 209h1M415 209h1M427 209h1M464 209h1M14 210h1M50 210h1M63 210h1M86 210h1M392 210h1M415 210h1M428 210h1M464 210h1M14 211h1M50 211h1M63 211h1M86 211h1M392 211h1M415 211h1M428 211h1M464 211h1M13 212h1M50 212h1M62 212h1M86 212h1M392 212h1M416 212h1M428 212h1M465 212h1M13 213h1M50 213h1M62 213h1M86 213h1M392 213h1M416 213h1M428 213h1M465 213h1M13 214h1M50 214h1M62 214h1M86 214h1M392 214h1M416 214h1M428 214h1M465 214h1M13 215h1M50 215h1M62 215h1M86 215h1M392 215h1M416 215h1M428 215h1M465 215h1M13 216h1M49 216h1M62 216h1M86 216h1M392 216h1M416 216h1M429 216h1M465 216h1M13 217h1M49 217h1M62 217h1M86 217h1M392 217h1M416 217h1M429 217h1M465 217h1M13 218h1M49 218h1M61 218h1M86 218h1M392 218h1M417 218h1M429 218h1M465 218h1M13 219h1M49 219h1M61 219h1M86 219h1M392 219h1M417 219h1M429 219h1M465 219h1M13 220h1M49 220h1M61 220h1M86 220h1M392 220h1M417 220h1M429 220h1M465 220h1M13 221h1M49 221h1M61 221h1M85 221h1M393 221h1M417 221h1M429 221h1M465 221h1M13 222h1M49 222h1M61 222h1M85 222h1M393 222h1M417 222h1M429 222h1M465 222h1M13 223h1M48 223h1M61 223h1M85 223h1M393 223h1M417 223h1M430 223h1M465 223h1M13 224h1M48 224h1M60 224h1M85 224h1M393 224h1M418 224h1M430 224h1M465 224h1M13 225h1M48 225h1M60 225h1M85 225h1M393 225h1M418 225h1M430 225h1M465 225h1M13 226h1M48 226h1M60 226h1M84 226h1M394 226h1M418 226h1M430 226h1M465 226h1M13 227h1M48 227h1M60 227h1M84 227h1M394 227h1M418 227h1M430 227h1M465 227h1M12 228h1M48 228h1M60 228h1M84 228h1M394 228h1M418 228h1M430 228h1M466 228h1M12 229h1M48 229h1M60 229h1M84 229h1M394 229h1M418 229h1M430 229h1M466 229h1M12 230h1M48 230h1M60 230h1M84 230h1M394 230h1M418 230h1M430 230h1M466 230h1M12 231h1M48 231h1M60 231h1M84 231h1M394 231h1M418 231h1M430 231h1M466 231h1M12 232h1M48 232h1M60 232h1M84 232h1M394 232h1M418 232h1M430 232h1M466 232h1M12 233h1M48 233h1M60 233h1M84 233h1M394 233h1M418 233h1M430 233h1M466 233h1M12 234h1M48 234h1M60 234h1M84 234h1M394 234h1M418 234h1M430 234h1M466 234h1M12 235h1M48 235h1M60 235h1M84 235h1M394 235h1M418 235h1M430 235h1M466 235h1M12 236h1M48 236h1M60 236h1M84 236h1M394 236h1M418 236h1M430 236h1M466 236h1M12 237h1M48 237h1M60 237h1M84 237h1M394 237h1M418 237h1M430 237h1M466 237h1M12 238h1M48 238h1M60 238h1M84 238h1M394 238h1M418 238h1M430 238h1M466 238h1M12 239h1M48 239h1M60 239h1M84 239h1M394 239h1M418 239h1M430 239h1M466 239h1M12 240h1M48 240h1M60 240h1M84 240h1M394 240h1M418 240h1M430 240h1M466 240h1M12 241h1M48 241h1M60 241h1M84 241h1M394 241h1M418 241h1M430 241h1M466 241h1M12 242h1M48 242h1M60 242h1M84 242h1M394 242h1M418 242h1M430 242h1M466 242h1M12 243h1M48 243h1M60 243h1M84 243h1M394 243h1M418 243h1M430 243h1M466 243h1M12 244h1M48 244h1M60 244h1M84 244h1M394 244h1M418 244h1M430 244h1M466 244h1M12 245h1M48 245h1M60 245h1M84 245h1M394 245h1M418 245h1M430 245h1M466 245h1M12 246h1M48 246h1M60 246h1M84 246h1M394 246h1M418 246h1M430 246h1M466 246h1M12 247h1M48 247h1M60 247h1M84 247h1M394 247h1M418 247h1M430 247h1M466 247h1M12 248h1M48 248h1M60 248h1M84 248h1M394 248h1M418 248h1M430 248h1M466 248h1M12 249h1M48 249h1M60 249h1M84 249h1M394 249h1M418 249h1M430 249h1M466 249h1M13 250h1M48 250h1M60 250h1M84 250h1M394 250h1M418 250h1M430 250h1M465 250h1M13 251h1M48 251h1M60 251h1M84 251h1M394 251h1M418 251h1M430 251h1M465 251h1M13 252h1M48 252h1M60 252h1M85 252h1M393 252h1M418 252h1M430 252h1M465 252h1M13 253h1M48 253h1M60 253h1M85 253h1M393 253h1M418 253h1M430 253h1M465 253h1M13 254h1M48 254h1M61 254h1M85 254h1M393 254h1M417 254h1M430 254h1M465 254h1M13 255h1M48 255h1M61 255h1M85 255h1M393 255h1M417 255h1M430 255h1M465 255h1M13 256h1M49 256h1M61 256h1M85 256h1M393 256h1M417 256h1M429 256h1M465 256h1M13 257h1M49 257h1M61 257h1M85 257h1M393 257h1M417 257h1M429 257h1M465 257h1M13 258h1M49 258h1M61 258h1M86 258h1M392 258h1M417 258h1M429 258h1M465 258h1M13 259h1M49 259h1M61 259h1M86 259h1M392 259h1M417 259h1M429 259h1M465 259h1M13 260h1M49 260h1M62 260h1M86 260h1M392 260h1M416 260h1M429 260h1M465 260h1M13 261h1M49 261h1M62 261h1M86 261h1M392 261h1M416 261h1M429 261h1M465 261h1M13 262h1M50 262h1M62 262h1M86 262h1M392 262h1M416 262h1M428 262h1M465 262h1M13 263h1M50 263h1M62 263h1M86 263h1M392 263h1M416 263h1M428 263h1M465 263h1M13 264h1M50 264h1M62 264h1M86 264h1M392 264h1M416 264h1M428 264h1M465 264h1M13 265h1M50 265h1M62 265h1M86 265h1M392 265h1M416 265h1M428 265h1M465 265h1M14 266h1M50 266h1M62 266h1M86 266h1M392 266h1M416 266h1M428 266h1M464 266h1M14 267h1M50 267h1M63 267h1M86 267h1M392 267h1M415 267h1M428 267h1M464 267h1M14 268h1M50 268h1M63 268h1M86 268h1M392 268h1M415 268h1M428 268h1M464 268h1M14 269h1M51 269h1M63 269h1M87 269h1M391 269h1M415 269h1M427 269h1M464 269h1M14 270h1M51 270h1M63 270h1M87 270h1M391 270h1M415 270h1M427 270h1M464 270h1M14 271h1M51 271h1M63 271h1M87 271h1M391 271h1M415 271h1M427 271h1M464 271h1M14 272h1M51 272h1M63 272h1M87 272h1M391 272h1M415 272h1M427 272h1M464 272h1M14 273h1M51 273h1M64 273h1M88 273h1M390 273h1M414 273h1M427 273h1M464 273h1M15 274h1M51 274h1M64 274h1M88 274h1M390 274h1M414 274h1M427 274h1M463 274h1M15 275h1M52 275h1M64 275h1M89 275h1M389 275h1M414 275h1M426 275h1M463 275h1M15 276h1M52 276h1M64 276h1M89 276h1M389 276h1M414 276h1M426 276h1M463 276h1M15 277h1M52 277h1M64 277h1M89 277h1M389 277h1M414 277h1M426 277h1M463 277h1M15 278h1M52 278h1M64 278h1M89 278h1M389 278h1M414 278h1M426 278h1M463 278h1M15 279h1M52 279h1M65 279h1M90 279h1M388 279h1M413 279h1M426 279h1M463 279h1M16 280h1M53 280h1M65 280h1M90 280h1M388 280h1M413 280h1M425 280h1M462 280h1M16 281h1M53 281h1M65 281h1M90 281h1M388 281h1M413 281h1M425 281h1M462 281h1M16 282h1M53 282h1M65 282h1M90 282h1M388 282h1M413 282h1M425 282h1M462 282h1M16 283h1M53 283h1M65 283h1M91 283h1M387 283h1M413 283h1M425 283h1M462 283h1M17 284h1M54 284h1M66 284h1M91 284h1M387 284h1M412 284h1M424 284h1M461 284h1M17 285h1M54 285h1M66 285h1M91 285h1M387 285h1M412 285h1M424 285h1M461 285h1M17 286h1M54 286h1M66 286h1M92 286h1M386 286h1M412 286h1M424 286h1M461 286h1M17 287h1M54 287h1M67 287h1M92 287h1M386 287h1M411 287h1M424 287h1M461 287h1M18 288h1M55 288h1M67 288h1M92 288h1M386 288h1M411 288h1M423 288h1M460 288h1M18 289h1M55 289h1M67 289h1M92 289h1M386 289h1M411 289h1M423 289h1M460 289h1M18 290h1M55 290h1M68 290h1M93 290h1M385 290h1M410 290h1M423 290h1M460 290h1M18 291h1M55 291h1M68 291h1M93 291h1M385 291h1M410 291h1M423 291h1M460 291h1M19 292h1M55 292h1M68 292h1M93 292h1M385 292h1M410 292h1M423 292h1M459 292h1M19 293h1M56 293h1M69 293h1M93 293h1M385 293h1M409 293h1M422 293h1M459 293h1M19 294h1M56 294h1M69 294h1M94 294h1M384 294h1M409 294h1M422 294h1M459 294h1M19 295h1M56 295h1M69 295h1M94 295h1M384 295h1M409 295h1M422 295h1M459 295h1M20 296h1M56 296h1M70 296h1M95 296h1M383 296h1M408 296h1M422 296h1M458 296h1M20 297h1M57 297h1M70 297h1M95 297h1M383 297h1M408 297h1M421 297h1M458 297h1M20 298h1M57 298h1M70 298h1M95 298h1M383 298h1M408 298h1M421 298h1M458 298h1M20 299h1M58 299h1M71 299h1M96 299h1M382 299h1M407 299h1M420 299h1M458 299h1M21 300h1M58 300h1M71 300h1M96 300h1M382 300h1M407 300h1M420 300h1M457 300h1M21 301h1M59 301h1M71 301h1M97 301h1M381 301h1M407 301h1M419 301h1M457 301h1M21 302h1M59 302h1M72 302h1M97 302h1M381 302h1M406 302h1M419 302h1M457 302h1M22 303h1M60 303h1M72 303h1M98 303h1M380 303h1M406 303h1M418 303h1M456 303h1M22 304h1M60 304h1M72 304h1M98 304h1M380 304h1M406 304h1M418 304h1M456 304h1M22 305h1M60 305h1M73 305h1M99 305h1M379 305h1M405 305h1M418 305h1M456 305h1M22 306h1M61 306h1M73 306h1M99 306h1M379 306h1M405 306h1M417 306h1M456 306h1M23 307h1M61 307h1M74 307h1M100 307h1M378 307h1M404 307h1M417 307h1M455 307h1M23 308h1M61 308h1M74 308h1M100 308h1M378 308h1M404 308h1M417 308h1M455 308h1M23 309h1M62 309h1M75 309h1M101 309h1M377 309h1M403 309h1M416 309h1M455 309h1M23 310h1M62 310h1M75 310h1M101 310h1M377 310h1M403 310h1M416 310h1M455 310h1M24 311h1M63 311h1M76 311h1M102 311h1M376 311h1M402 311h1M415 311h1M454 311h1M24 312h1M63 312h1M76 312h1M102 312h1M376 312h1M402 312h1M415 312h1M454 312h1M25 313h1M64 313h1M76 313h1M103 313h1M375 313h1M402 313h1M414 313h1M453 313h1M25 314h1M64 314h1M77 314h1M104 314h1M374 314h1M401 314h1M414 314h1M453 314h1M26 315h1M65 315h1M77 315h1M104 315h1M374 315h1M401 315h1M413 315h1M452 315h1M26 316h1M65 316h1M78 316h1M105 316h1M373 316h1M400 316h1M413 316h1M452 316h1M26 317h1M65 317h1M78 317h1M106 317h1M372 317h1M400 317h1M413 317h1M452 317h1M27 318h1M66 318h1M79 318h1M106 318h1M372 318h1M399 318h1M412 318h1M451 318h1M27 319h1M66 319h1M79 319h1M107 319h1M371 319h1M399 319h1M412 319h1M451 319h1M28 320h1M66 320h1M80 320h1M107 320h1M371 320h1M398 320h1M412 320h1M450 320h1M28 321h1M67 321h1M80 321h1M108 321h1M370 321h1M398 321h1M411 321h1M450 321h1M28 322h1M67 322h1M81 322h1M109 322h1M369 322h1M397 322h1M411 322h1M450 322h1M29 323h1M68 323h1M81 323h1M110 323h1M368 323h1M397 323h1M410 323h1M449 323h1M29 324h1M68 324h1M82 324h1M110 324h1M368 324h1M396 324h1M410 324h1M449 324h1M29 325h1M69 325h1M82 325h1M111 325h1M367 325h1M396 325h1M409 325h1M449 325h1M30 326h1M69 326h1M83 326h1M112 326h1M366 326h1M395 326h1M409 326h1M448 326h1M30 327h1M70 327h1M83 327h1M112 327h1M366 327h1M395 327h1M408 327h1M448 327h1M31 328h1M70 328h1M84 328h1M113 328h1M365 328h1M394 328h1M408 328h1M447 328h1M31 329h1M71 329h1M85 329h1M113 329h1M365 329h1M393 329h1M407 329h1M447 329h1M32 330h1M71 330h1M85 330h1M114 330h1M364 330h1M393 330h1M407 330h1M446 330h1M32 331h1M72 331h1M86 331h1M115 331h1M363 331h1M392 331h1M406 331h1M446 331h1M32 332h1M73 332h1M86 332h1M116 332h1M362 332h1M392 332h1M405 332h1M446 332h1M33 333h1M73 333h1M87 333h1M116 333h1M362 333h1M391 333h1M405 333h1M445 333h1M33 334h1M74 334h1M87 334h1M117 334h1M361 334h1M391 334h1M404 334h1M445 334h1M34 335h1M75 335h1M88 335h1M118 335h1M360 335h1M390 335h1M403 335h1M444 335h1M34 336h1M75 336h1M89 336h1M119 336h1M359 336h1M389 336h1M403 336h1M444 336h1M35 337h1M76 337h1M89 337h1M119 337h1M359 337h1M389 337h1M402 337h1M443 337h1M35 338h1M76 338h1M90 338h1M120 338h1M358 338h1M388 338h1M402 338h1M443 338h1M36 339h1M77 339h1M91 339h1M121 339h1M357 339h1M387 339h1M401 339h1M442 339h1M36 340h1M77 340h1M92 340h1M122 340h1M356 340h1M386 340h1M401 340h1M442 340h1M37 341h1M78 341h1M92 341h1M122 341h1M356 341h1M386 341h1M400 341h1M441 341h1M37 342h1M78 342h1M93 342h1M123 342h1M355 342h1M385 342h1M400 342h1M441 342h1M38 343h1M79 343h1M93 343h1M124 343h1M354 343h1M385 343h1M399 343h1M440 343h1M38 344h1M80 344h1M94 344h1M125 344h1M353 344h1M384 344h1M398 344h1M440 344h1M39 345h1M80 345h1M95 345h1M126 345h1M352 345h1M383 345h1M398 345h1M439 345h1M39 346h1M81 346h1M96 346h1M127 346h1M351 346h1M382 346h1M397 346h1M439 346h1M40 347h1M82 347h1M96 347h1M128 347h1M350 347h1M382 347h1M396 347h1M438 347h1M40 348h1M83 348h1M97 348h1M129 348h1M349 348h1M381 348h1M395 348h1M438 348h1M41 349h1M83 349h1M98 349h1M130 349h1M348 349h1M380 349h1M395 349h1M437 349h1M41 350h1M84 350h1M99 350h1M131 350h1M347 350h1M379 350h1M394 350h1M437 350h1M42 351h1M85 351h1M100 351h1M132 351h1M346 351h1M378 351h1M393 351h1M436 351h1M42 352h1M86 352h1M100 352h1M133 352h1M345 352h1M378 352h1M392 352h1M436 352h1M43 353h1M87 353h1M101 353h1M134 353h1M344 353h1M377 353h1M391 353h1M435 353h1M43 354h1M87 354h1M102 354h1M135 354h1M343 354h1M376 354h1M391 354h1M435 354h1M44 355h1M88 355h1M103 355h1M136 355h1M342 355h1M375 355h1M390 355h1M434 355h1M45 356h1M89 356h1M104 356h1M137 356h2M340 356h2M374 356h1M389 356h1M433 356h1M46 357h1M90 357h1M104 357h1M139 357h1M339 357h1M374 357h1M388 357h1M432 357h1M46 358h1M90 358h1M105 358h1M140 358h1M338 358h1M373 358h1M388 358h1M432 358h1M47 359h1M91 359h1M106 359h1M141 359h1M336 359h2M372 359h1M387 359h1M431 359h1M48 360h1M92 360h1M107 360h1M142 360h2M335 360h1M371 360h1M386 360h1M430 360h1M48 361h1M92 361h1M108 361h1M144 361h1M334 361h1M370 361h1M386 361h1M430 361h1M49 362h1M93 362h1M109 362h1M145 362h1M332 362h2M369 362h1M385 362h1M429 362h1M49 363h1M94 363h1M110 363h1M146 363h2M331 363h1M368 363h1M384 363h1M429 363h1M50 364h1M95 364h1M111 364h1M148 364h1M330 364h1M367 364h1M383 364h1M428 364h1M50 365h1M95 365h1M112 365h1M149 365h2M328 365h2M366 365h1M383 365h1M428 365h1M51 366h1M96 366h1M113 366h1M151 366h2M326 366h2M365 366h1M382 366h1M427 366h1M52 367h1M97 367h1M114 367h1M153 367h1M325 367h1M364 367h1M381 367h1M426 367h1M52 368h1M98 368h1M115 368h1M154 368h1M323 368h2M363 368h1M380 368h1M426 368h1M53 369h1M99 369h1M116 369h1M155 369h2M322 369h1M362 369h1M379 369h1M425 369h1M54 370h1M100 370h1M117 370h1M157 370h1M321 370h1M361 370h1M378 370h1M424 370h1M54 371h1M101 371h1M118 371h1M158 371h2M319 371h2M360 371h1M377 371h1M424 371h1M55 372h1M102 372h1M119 372h1M160 372h2M317 372h2M359 372h1M376 372h1M423 372h1M56 373h1M103 373h1M120 373h1M162 373h1M316 373h1M358 373h1M375 373h1M422 373h1M56 374h1M104 374h1M121 374h2M163 374h1M314 374h2M356 374h2M374 374h1M422 374h1M57 375h1M105 375h1M123 375h1M164 375h2M313 375h1M355 375h1M373 375h1M421 375h1M58 376h1M106 376h1M124 376h1M166 376h2M311 376h2M354 376h1M372 376h1M420 376h1M59 377h1M107 377h1M125 377h1M168 377h2M309 377h2M353 377h1M371 377h1M419 377h1M59 378h1M108 378h1M126 378h2M170 378h2M307 378h2M351 378h2M370 378h1M419 378h1M60 379h1M109 379h1M128 379h1M172 379h2M305 379h2M350 379h1M369 379h1M418 379h1M61 380h1M110 380h1M129 380h1M174 380h2M303 380h2M349 380h1M368 380h1M417 380h1M62 381h1M111 381h1M130 381h1M176 381h2M301 381h2M348 381h1M367 381h1M416 381h1M63 382h1M112 382h1M131 382h2M178 382h2M299 382h2M346 382h2M366 382h1M415 382h1M63 383h1M113 383h2M133 383h1M180 383h3M296 383h3M345 383h1M364 383h2M415 383h1M64 384h1M115 384h1M134 384h1M183 384h2M294 384h2M344 384h1M363 384h1M414 384h1M65 385h1M116 385h1M135 385h2M185 385h4M290 385h4M342 385h2M362 385h1M413 385h1M66 386h1M117 386h2M137 386h2M189 386h4M286 386h4M340 386h2M360 386h2M412 386h1M67 387h1M119 387h1M139 387h1M193 387h3M283 387h3M339 387h1M359 387h1M411 387h1M68 388h1M120 388h2M140 388h1M196 388h4M279 388h4M338 388h1M357 388h2M410 388h1M68 389h1M122 389h1M141 389h2M200 389h4M275 389h4M336 389h2M356 389h1M410 389h1M69 390h1M123 390h1M143 390h1M204 390h2M273 390h2M335 390h1M355 390h1M409 390h1M70 391h1M124 391h2M144 391h1M206 391h4M269 391h4M333 391h2M353 391h2M408 391h1M71 392h1M126 392h1M145 392h2M210 392h11M258 392h11M331 392h2M352 392h1M407 392h1M72 393h1M127 393h1M147 393h2M221 393h5M252 393h6M329 393h2M351 393h1M406 393h1M73 394h1M128 394h1M149 394h2M226 394h26M328 394h1M350 394h1M405 394h1M74 395h1M129 395h2M151 395h2M326 395h2M348 395h2M404 395h1M75 396h1M131 396h1M153 396h2M324 396h2M347 396h1M403 396h1M76 397h1M132 397h1M155 397h1M322 397h2M346 397h1M402 397h1M77 398h1M133 398h2M156 398h2M320 398h2M344 398h2M401 398h1M78 399h1M135 399h1M158 399h2M318 399h2M343 399h1M400 399h1M79 400h1M136 400h2M160 400h3M316 400h2M341 400h2M399 400h1M80 401h1M138 401h1M163 401h2M314 401h2M339 401h2M398 401h1M81 402h1M139 402h2M165 402h2M311 402h3M337 402h2M397 402h1M82 403h1M141 403h2M167 403h2M309 403h2M335 403h2M396 403h1M83 404h1M143 404h2M169 404h2M307 404h2M334 404h1M395 404h1M84 405h1M145 405h2M171 405h3M305 405h2M332 405h2M394 405h1M85 406h1M147 406h1M174 406h3M302 406h3M331 406h1M393 406h1M86 407h1M148 407h2M177 407h3M299 407h3M329 407h2M392 407h1M87 408h1M150 408h1M180 408h3M296 408h3M327 408h2M391 408h1M88 409h1M151 409h2M183 409h3M293 409h3M325 409h2M390 409h1M89 410h1M153 410h2M186 410h3M290 410h3M323 410h2M388 410h2M90 411h2M155 411h3M189 411h3M287 411h3M321 411h2M387 411h1M92 412h1M158 412h3M192 412h3M284 412h3M318 412h3M386 412h1M93 413h1M161 413h2M195 413h4M279 413h5M315 413h3M385 413h1M94 414h1M163 414h2M199 414h6M273 414h6M313 414h2M384 414h1M95 415h1M165 415h2M205 415h7M267 415h6M311 415h2M382 415h2M96 416h2M167 416h3M212 416h6M260 416h7M309 416h2M381 416h1M98 417h1M170 417h3M218 417h6M254 417h6M306 417h3M380 417h1M99 418h1M173 418h2M224 418h30M303 418h3M379 418h1M100 419h2M175 419h2M301 419h2M377 419h2M102 420h1M177 420h2M299 420h2M376 420h1M103 421h1M179 421h3M297 421h2M375 421h1M104 422h2M182 422h4M293 422h4M373 422h2M106 423h1M186 423h4M288 423h5M372 423h1M107 424h2M190 424h5M284 424h4M370 424h2M109 425h1M195 425h4M280 425h4M369 425h1M110 426h2M199 426h4M275 426h5M367 426h2M112 427h1M203 427h7M269 427h6M366 427h1M113 428h2M210 428h6M262 428h7M364 428h2M115 429h2M216 429h7M256 429h6M362 429h2M117 430h2M223 430h33M360 430h2M119 431h1M359 431h1M120 432h2M357 432h2M122 433h1M356 433h1M123 434h1M355 434h1M124 435h2M353 435h2M126 436h2M351 436h2M128 437h2M349 437h2M130 438h2M347 438h2M132 439h2M345 439h2M134 440h2M343 440h2M136 441h2M341 441h2M138 442h2M339 442h2M140 443h2M337 443h2M142 444h2M335 444h2M144 445h2M333 445h2M146 446h3M330 446h3M149 447h2M328 447h2M151 448h2M326 448h2M153 449h3M323 449h3M156 450h2M320 450h3M158 451h3M318 451h2M161 452h3M315 452h3M164 453h2M313 453h2M166 454h2M311 454h2M168 455h3M307 455h4M171 456h4M303 456h4M175 457h4M300 457h3M179 458h4M296 458h4M183 459h3M292 459h4M186 460h4M288 460h4M190 461h4M284 461h4M194 462h4M280 462h4M198 463h6M274 463h6M204 464h8M266 464h8M212 465h16M250 465h16M228 466h22"/></g>
<g id="cusps"><path stroke="#ffffff" d="M281 17h1M281 18h1M281 19h1M280 20h1M280 21h1M280 22h1M280 23h1M280 24h1M165 25h1M280 25h1M165 26h1M279 26h1M166 27h1M279 27h1M166 28h1M279 28h1M166 29h1M279 29h1M167 30h1M279 30h1M167 31h1M279 31h1M168 32h1M278 32h1M168 33h1M278 33h1M168 34h1M278 34h1M169 35h1M278 35h1M169 36h1M278 36h1M169 37h1M277 37h1M170 38h1M277 38h1M170 39h1M277 39h1M170 40h1M277 40h1M171 41h1M277 41h1M171 42h1M277 42h1M172 43h1M276 43h1M172 44h1M276 44h1M172 45h1M276 45h1M173 46h1M276 46h1M173 47h1M276 47h1M173 48h1M276 48h1M174 49h1M275 49h1M174 50h1M275 50h1M174 51h1M275 51h1M175 52h1M175 53h1M176 54h1M176 55h1M176 56h1M177 57h1M177 58h1M187 68h1M387 68h1M187 69h1M386 69h1M188 70h1M297 70h1M385 70h1M188 71h1M297 71h1M384 71h1M188 72h1M296 72h1M383 72h1M189 73h1M296 73h1M383 73h1M189 74h1M296 74h1M382 74h1M189 75h1M295 75h1M381 75h1M190 76h1M295 76h1M380 76h1M190 77h1M295 77h1M379 77h1M190 78h1M294 78h1M378 78h1M191 79h1M294 79h1M377 79h1M191 80h1M294 80h1M376 80h1M191 81h1M293 81h1M375 81h1M191 82h1M293 82h1M375 82h1M192 83h1M293 83h1M374 83h1M192 84h1M293 84h1M373 84h1M192 85h1M292 85h1M372 85h1M193 86h1M292 86h1M371 86h1M193 87h1M292 87h1M370 87h1M193 88h1M291 88h1M369 88h1M194 89h1M291 89h1M368 89h1M194 90h1M291 90h1M368 90h1M68 91h1M290 91h1M367 91h1M69 92h1M290 92h1M366 92h1M70 93h1M365 93h1M71 94h1M364 94h1M72 95h2M74 96h1M75 97h1M76 98h1M77 99h1M78 100h1M79 101h1M80 102h1M81 103h2M83 104h1M84 105h1M85 106h1M86 107h1M87 108h1M88 109h1M89 110h2M91 111h1M92 112h1M93 113h1M94 114h1M110 116h1M111 117h1M112 118h1M113 119h1M114 120h2M116 121h1M117 122h1M118 123h1M119 124h1M120 125h1M121 126h1M122 127h2M124 128h1M125 129h1M126 130h1M127 131h1M389 142h1M387 143h2M385 144h2M384 145h1M382 146h2M380 147h2M379 148h1M377 149h2M375 150h2M374 151h1M372 152h2M370 153h2M369 154h1M452 165h2M449 166h3M447 167h2M444 168h3M441 169h3M438 170h3M436 171h2M433 172h3M430 173h3M427 174h3M425 175h2M422 176h3M71 177h2M420 177h2M73 178h3M76 179h2M78 180h3M81 181h3M84 182h3M87 183h2M89 184h3M92 185h2M17 197h3M20 198h6M26 199h6M32 200h5M37 201h6M43 202h6M49 203h3M60 239h24M395 239h24M427 275h3M430 276h6M436 277h6M442 278h5M447 279h6M453 280h6M459 281h3M385 293h2M387 294h3M390 295h2M392 296h3M395 297h3M398 298h3M401 299h2M403 300h3M57 301h2M406 301h2M54 302h3M52 303h2M49 304h3M46 305h3M43 306h3M41 307h2M38 308h3M35 309h3M32 310h3M30 311h2M27 312h3M25 313h2M109 324h1M107 325h2M105 326h2M104 327h1M102 328h2M100 329h2M99 330h1M97 331h2M95 332h2M94 333h1M92 334h2M90 335h2M89 336h1M351 347h1M352 348h1M353 349h1M354 350h1M355 351h2M357 352h1M358 353h1M359 354h1M360 355h1M361 356h1M362 357h1M363 358h2M365 359h1M366 360h1M367 361h1M368 362h1M384 364h1M385 365h1M386 366h1M387 367h1M388 368h2M390 369h1M391 370h1M392 371h1M393 372h1M394 373h1M395 374h1M396 375h1M397 376h2M399 377h1M400 378h1M401 379h1M402 380h1M403 381h1M404 382h1M405 383h2M114 384h1M407 384h1M113 385h1M408 385h1M112 386h1M188 386h1M409 386h1M111 387h1M188 387h1M410 387h1M110 388h1M187 388h1M284 388h1M110 389h1M187 389h1M284 389h1M109 390h1M187 390h1M285 390h1M108 391h1M186 391h1M285 391h1M107 392h1M186 392h1M285 392h1M106 393h1M186 393h1M286 393h1M105 394h1M185 394h1M286 394h1M104 395h1M185 395h1M286 395h1M103 396h1M185 396h1M287 396h1M102 397h1M184 397h1M287 397h1M102 398h1M184 398h1M287 398h1M101 399h1M184 399h1M288 399h1M100 400h1M184 400h1M288 400h1M99 401h1M183 401h1M288 401h1M98 402h1M183 402h1M288 402h1M97 403h1M183 403h1M289 403h1M96 404h1M182 404h1M289 404h1M95 405h1M182 405h1M289 405h1M95 406h1M182 406h1M290 406h1M94 407h1M181 407h1M290 407h1M93 408h1M181 408h1M290 408h1M92 409h1M291 409h1M91 410h1M291 410h1M301 420h1M301 421h1M302 422h1M302 423h1M302 424h1M303 425h1M303 426h1M203 427h1M304 427h1M203 428h1M304 428h1M203 429h1M304 429h1M202 430h1M305 430h1M202 431h1M305 431h1M202 432h1M305 432h1M202 433h1M306 433h1M202 434h1M306 434h1M202 435h1M306 435h1M201 436h1M307 436h1M201 437h1M307 437h1M201 438h1M308 438h1M201 439h1M308 439h1M201 440h1M308 440h1M201 441h1M309 441h1M200 442h1M309 442h1M200 443h1M309 443h1M200 444h1M310 444h1M200 445h1M310 445h1M200 446h1M310 446h1M199 447h1M311 447h1M199 448h1M311 448h1M199 449h1M312 449h1M199 450h1M312 450h1M199 451h1M312 451h1M199 452h1M313 452h1M198 453h1M313 453h1M198 454h1M198 455h1M198 456h1M198 457h1M198 458h1M197 459h1M197 460h1M197 461h1"/><path stroke="#808080" d="M289 93h1M288 95h1M288 97h1M287 99h1M286 101h1M286 103h1M285 105h1M284 107h1M284 109h1M283 111h1M282 113h1M281 115h1M281 117h1M280 119h1M279 121h1M279 123h1M278 125h1M277 127h1M277 129h1M276 131h1M127 132h1M275 133h1M129 134h1M275 135h1M131 136h1M274 137h1M133 138h1M273 139h1M135 140h1M273 141h1M137 142h1M139 143h1M272 143h1M141 145h1M271 145h1M143 147h1M271 147h1M145 149h1M270 149h1M147 151h1M269 151h1M149 153h1M268 153h1M151 155h1M268 155h1M369 155h1M367 156h1M153 157h1M267 157h1M365 158h1M155 159h1M266 159h1M363 159h1M361 160h1M157 161h1M266 161h1M359 161h1M159 163h1M265 163h1M357 163h1M161 164h1M355 164h1M264 165h1M353 165h1M163 166h1M264 167h1M351 167h1M165 168h1M349 168h1M263 169h1M347 169h1M167 170h1M262 171h1M345 171h1M169 172h1M343 172h1M262 173h1M341 173h1M171 174h1M339 174h1M261 175h1M173 176h1M337 176h1M260 177h1M335 177h1M175 178h1M333 178h1M260 179h1M177 180h1M331 180h1M259 181h1M329 181h1M179 182h1M327 182h1M258 183h1M325 183h1M181 184h1M257 185h1M323 185h1M95 186h1M183 186h1M321 186h1M97 187h1M185 187h1M257 187h1M319 187h1M99 188h1M101 189h1M103 189h1M187 189h1M256 189h1M317 189h1M105 190h1M315 190h1M107 191h1M109 191h1M189 191h1M255 191h1M313 191h1M111 192h1M311 192h1M113 193h1M191 193h1M255 193h1M115 194h1M117 194h1M309 194h1M119 195h1M193 195h1M254 195h1M307 195h1M121 196h1M305 196h1M123 197h1M125 197h1M195 197h1M253 197h1M127 198h1M303 198h1M129 199h1M197 199h1M253 199h1M301 199h1M131 200h1M133 200h1M299 200h1M135 201h1M199 201h1M252 201h1M137 202h1M139 202h1M297 202h1M141 203h1M201 203h1M251 203h1M295 203h1M143 204h1M293 204h1M145 205h1M147 205h1M203 205h1M251 205h1M291 205h1M149 206h1M151 207h1M205 207h1M250 207h1M289 207h1M153 208h1M155 208h1M207 208h1M287 208h1M157 209h1M249 209h1M285 209h1M159 210h1M161 210h1M209 210h1M163 211h1M249 211h1M283 211h1M165 212h1M211 212h1M281 212h1M167 213h1M169 213h1M248 213h1M279 213h1M171 214h1M213 214h1M277 214h1M173 215h1M247 215h1M175 216h1M177 216h1M215 216h1M275 216h1M179 217h1M247 217h1M273 217h1M181 218h1M217 218h1M271 218h1M183 219h1M185 219h1M246 219h1M187 220h1M219 220h1M269 220h1M189 221h1M191 221h1M245 221h1M267 221h1M193 222h1M221 222h1M265 222h1M195 223h1M244 223h1M263 223h1M197 224h1M199 224h1M223 224h1M201 225h1M244 225h1M261 225h1M203 226h1M225 226h1M259 226h1M205 227h1M207 227h1M243 227h1M257 227h1M209 228h1M227 228h1M211 229h1M213 229h1M229 229h1M242 229h1M255 229h1M215 230h1M253 230h1M217 231h1M231 231h1M242 231h1M251 231h1M219 232h1M221 232h1M223 233h1M233 233h1M241 233h1M249 233h1M225 234h1M247 234h1M227 235h1M229 235h1M235 235h1M240 235h1M245 235h1M231 236h1M243 236h1M233 237h1M237 237h1M240 237h1M235 238h1M237 238h1M241 238h1M239 239h1M237 240h1M241 240h1M243 240h1M238 241h1M241 241h1M245 241h1M235 242h1M247 242h1M233 243h1M238 243h1M243 243h1M249 243h1M251 243h1M231 244h1M253 244h1M229 245h1M237 245h1M245 245h1M255 245h1M257 246h1M259 246h1M227 247h1M236 247h1M247 247h1M261 247h1M225 248h1M263 248h1M223 249h1M236 249h1M249 249h1M265 249h1M267 249h1M251 250h1M269 250h1M221 251h1M235 251h1M271 251h1M273 251h1M219 252h1M253 252h1M275 252h1M217 253h1M234 253h1M277 253h1M255 254h1M279 254h1M281 254h1M215 255h1M234 255h1M283 255h1M213 256h1M257 256h1M285 256h1M211 257h1M233 257h1M287 257h1M289 257h1M209 258h1M259 258h1M291 258h1M232 259h1M293 259h1M295 259h1M207 260h1M261 260h1M297 260h1M205 261h1M231 261h1M299 261h1M203 262h1M263 262h1M301 262h1M303 262h1M231 263h1M305 263h1M201 264h1M265 264h1M307 264h1M199 265h1M230 265h1M309 265h1M311 265h1M197 266h1M267 266h1M313 266h1M195 267h1M229 267h1M315 267h1M269 268h1M317 268h1M319 268h1M193 269h1M229 269h1M321 269h1M191 270h1M271 270h1M323 270h1M325 270h1M189 271h1M228 271h1M273 271h1M327 271h1M329 272h1M187 273h1M227 273h1M275 273h1M331 273h1M333 273h1M185 274h1M335 274h1M183 275h1M227 275h1M277 275h1M337 275h1M181 276h1M339 276h1M341 276h1M226 277h1M279 277h1M343 277h1M179 278h1M345 278h1M347 278h1M177 279h1M225 279h1M281 279h1M349 279h1M175 280h1M351 280h1M225 281h1M283 281h1M353 281h1M355 281h1M173 282h1M357 282h1M171 283h1M224 283h1M285 283h1M359 283h1M169 284h1M361 284h1M363 284h1M223 285h1M287 285h1M365 285h1M167 286h1M367 286h1M165 287h1M223 287h1M289 287h1M369 287h1M371 287h1M163 288h1M373 288h1M161 289h1M222 289h1M291 289h1M375 289h1M377 289h1M379 290h1M159 291h1M221 291h1M293 291h1M381 291h1M157 292h1M383 292h1M155 293h1M221 293h1M295 293h1M297 294h1M153 295h1M220 295h1M151 296h1M299 296h1M149 297h1M219 297h1M147 298h1M301 298h1M218 299h1M145 300h1M303 300h1M143 301h1M218 301h1M141 302h1M305 302h1M217 303h1M139 304h1M307 304h1M137 305h1M216 305h1M135 306h1M309 306h1M133 307h1M216 307h1M311 308h1M131 309h1M215 309h1M129 310h1M313 310h1M127 311h1M214 311h1M315 312h1M125 313h1M214 313h1M123 314h1M317 314h1M121 315h1M213 315h1M319 315h1M119 317h1M212 317h1M321 317h1M117 318h1M115 319h1M212 319h1M323 319h1M113 320h1M211 321h1M325 321h1M111 322h1M109 323h1M210 323h1M327 323h1M210 325h1M329 325h1M209 327h1M331 327h1M208 329h1M333 329h1M207 331h1M335 331h1M207 333h1M337 333h1M206 335h1M339 335h1M341 336h1M205 337h1M343 338h1M205 339h1M345 340h1M204 341h1M347 342h1M203 343h1M349 344h1M203 345h1M351 346h1M202 347h1M201 349h1M201 351h1M200 353h1M199 355h1M199 357h1M198 359h1M197 361h1M197 363h1M196 365h1M195 367h1M194 369h1M194 371h1M193 373h1M192 375h1M192 377h1M191 379h1M190 381h1M190 383h1M189 385h1"/></g>
<g id="sign_Ari"><path stroke="#ff0000" d="M350 405h3M360 405h3M349 406h1M353 406h1M359 406h1M363 406h1M348 407h1M354 407h1M358 407h1M364 407h1M348 408h1M354 408h1M358 408h1M364 408h1M348 409h1M354 409h1M358 409h1M364 409h1M349 410h1M354 410h2M357 410h2M363 410h1M350 411h1M355 411h1M357 411h1M362 411h1M355 412h1M357 412h1M355 413h1M357 413h1M356 414h1M356 415h1M356 416h1M356 417h1M356 418h1M356 419h1M356 420h1M356 421h1M335 423h3M336 424h2M335 425h1M337 425h1M331 426h2M334 426h1M330 427h1M333 427h1M329 428h1M334 428h1M329 429h1M334 429h1M330 430h1M333 430h1M331 431h2"/></g>
<g id="houseruler_1"><path stroke="#ff0000" d="M75 259h3M76 260h2M75 261h1M77 261h1M71 262h2M74 262h1M70 263h1M73 263h1M69 264h1M74 264h1M69 265h1M74 265h1M70 266h1M73 266h1M71 267h2"/></g>
<g id="sign_Tau"><path stroke="#ffff00" d="M422 322h1M434 322h1M423 323h1M433 323h1M423 324h1M433 324h1M424 325h2M431 325h2M426 326h5M424 327h2M431 327h2M423 328h1M433 328h1M423 329h1M433 329h1M422 330h1M434 330h1M422 331h1M434 331h1M422 332h1M434 332h1M422 333h1M434 333h1M422 334h1M434 334h1M423 335h1M433 335h1M423 336h1M433 336h1M424 337h2M431 337h2M426 338h5M413 350h3M412 351h1M416 351h1M412 352h1M416 352h1M412 353h1M416 353h1M413 354h3M414 355h1M412 356h5M414 357h1M414 358h1"/></g>
<g id="houseruler_2"><path stroke="#ffff00" d="M114 348h3M113 349h1M117 349h1M113 350h1M117 350h1M113 351h1M117 351h1M114 352h3M115 353h1M113 354h5M115 355h1M115 356h1"/></g>
<g id="sign_Gem"><path stroke="#00ff00" d="M442 217h1M456 217h1M443 218h1M455 218h1M444 219h11M446 220h1M452 220h1M446 221h1M452 221h1M446 222h1M452 222h1M446 223h1M452 223h1M446 224h1M452 224h1M446 225h1M452 225h1M446 226h1M452 226h1M446 227h1M452 227h1M446 228h1M452 228h1M446 229h1M452 229h1M446 230h1M452 230h1M444 231h11M443 232h1M455 232h1M442 233h1M456 233h1M446 247h1M450 247h1M447 248h3M446 249h1M450 249h1M446 250h1M450 250h1M446 251h1M450 251h1M447 252h3M448 253h1M446 254h5M448 255h1"/></g>
<g id="houseruler_3"><path stroke="#00ff00" d="M208 400h1M212 400h1M209 401h3M208 402h1M212 402h1M208 403h1M212 403h1M208 404h1M212 404h1M209 405h3M210 406h1M208 407h5M210 408h1"/></g>
<g id="sign_Can"><path stroke="#0000ff" d="M411 115h5M408 116h3M416 116h1M407 117h1M417 117h3M406 118h1M416 118h1M420 118h1M405 119h1M415 119h1M421 119h1M415 120h1M421 120h1M407 121h3M415 121h1M421 121h1M406 122h1M410 122h1M416 122h1M420 122h1M405 123h1M411 123h1M417 123h3M405 124h1M411 124h1M405 125h1M411 125h1M421 125h1M406 126h1M410 126h1M420 126h1M407 127h3M419 127h1M410 128h1M416 128h3M411 129h5M425 141h3M424 142h1M428 142h2M425 143h1M429 143h1M426 144h1M430 144h1M426 145h1M430 145h1M426 146h1M430 146h1M425 147h1M429 147h1M424 148h1M428 148h2M425 149h3"/></g>
<g id="houseruler_4"><path stroke="#0000ff" d="M306 388h3M305 389h1M309 389h2M306 390h1M310 390h1M307 391h1M311 391h1M307 392h1M311 392h1M307 393h1M311 393h1M306 394h1M310 394h1M305 395h1M309 395h2M306 396h3"/></g>
<g id="sign_Leo"><path stroke="#ff0000" d="M328 42h5M327 43h1M333 43h1M326 44h1M334 44h1M325 45h1M335 45h1M324 46h1M336 46h1M324 47h1M336 47h1M324 48h1M336 48h1M324 49h1M336 49h1M324 50h1M336 50h1M325 51h1M335 51h1M326 52h1M334 52h1M326 53h1M334 53h1M322 54h1M326 54h1M334 54h1M323 55h1M325 55h1M335 55h1M324 56h1M336 56h1M337 57h1M338 58h1M353 60h3M351 61h2M356 61h2M351 62h1M357 62h1M350 63h1M358 63h1M350 64h1M354 64h1M358 64h1M350 65h1M358 65h1M351 66h1M357 66h1M351 67h2M356 67h2M353 68h3"/></g>
<g id="houseruler_5"><path stroke="#ff0000" d="M370 338h3M368 339h2M373 339h2M368 340h1M374 340h1M367 341h1M375 341h1M367 342h1M371 342h1M375 342h1M367 343h1M375 343h1M368 344h1M374 344h1M368 345h2M373 345h2M370 346h3"/></g>
<g id="sign_Vir"><path stroke="#ffff00" d="M217 22h1M221 22h1M225 22h1M218 23h1M220 23h1M222 23h1M224 23h1M226 23h1M219 24h1M223 24h1M227 24h1M231 24h1M219 25h1M223 25h1M227 25h1M230 25h2M219 26h1M223 26h1M227 26h1M229 26h1M231 26h1M219 27h1M223 27h1M227 27h2M231 27h1M219 28h1M223 28h1M227 28h1M231 28h1M219 29h1M223 29h1M227 29h1M231 29h1M219 30h1M223 30h1M227 30h1M231 30h1M219 31h1M223 31h1M227 31h1M231 31h1M219 32h1M223 32h1M227 32h1M231 32h1M219 33h1M223 33h1M227 33h1M231 33h1M219 34h1M223 34h1M227 34h1M231 34h1M219 35h1M223 35h1M228 35h1M230 35h1M219 36h1M223 36h1M229 36h1M228 37h1M230 37h1M227 38h1M231 38h1"/><path stroke="#00ff00" d="M249 26h1M253 26h1M250 27h3M249 28h1M253 28h1M249 29h1M253 29h1M249 30h1M253 30h1M250 31h3M251 32h1M249 33h5M251 34h1"/></g>
<g id="houseruler_6"><path stroke="#00ff00" d="M399 279h1M403 279h1M400 280h3M399 281h1M403 281h1M399 282h1M403 282h1M399 283h1M403 283h1M400 284h3M401 285h1M399 286h5M401 287h1"/></g>
<g id="sign_Lib"><path stroke="#00ff00" d="M120 61h5M119 62h1M125 62h1M118 63h1M126 63h1M118 64h1M126 64h1M118 65h1M126 65h1M119 66h1M125 66h1M114 67h7M124 67h7M114 71h17"/><path stroke="#ffff00" d="M144 47h3M143 48h1M147 48h1M143 49h1M147 49h1M143 50h1M147 50h1M144 51h3M145 52h1M143 53h5M145 54h1M145 55h1"/></g>
<g id="houseruler_7"><path stroke="#ffff00" d="M404 211h3M403 212h1M407 212h1M403 213h1M407 213h1M403 214h1M407 214h1M404 215h3M405 216h1M403 217h5M405 218h1M405 219h1"/></g>
<g id="sign_Sco"><path stroke="#0000ff" d="M61 120h1M64 120h1M67 120h1M61 121h1M63 121h1M65 121h1M67 121h1M61 122h1M64 122h1M67 122h1M62 123h1M66 123h1M63 124h3M64 125h1M62 126h5M64 127h1M64 128h1M42 140h1M46 140h1M50 140h1M43 141h1M45 141h1M47 141h1M49 141h1M51 141h1M44 142h1M48 142h1M52 142h1M44 143h1M48 143h1M52 143h1M44 144h1M48 144h1M52 144h1M44 145h1M48 145h1M52 145h1M44 146h1M48 146h1M52 146h1M44 147h1M48 147h1M52 147h1M44 148h1M48 148h1M52 148h1M44 149h1M48 149h1M52 149h1M44 150h1M48 150h1M52 150h1M44 151h1M48 151h1M52 151h1M57 151h1M44 152h1M48 152h1M52 152h1M56 152h3M44 153h1M48 153h1M52 153h1M57 153h1M44 154h1M48 154h1M52 154h1M57 154h1M53 155h1M56 155h1M54 156h2"/></g>
<g id="houseruler_8"><path stroke="#0000ff" d="M360 122h1M363 122h1M366 122h1M360 123h1M362 123h1M364 123h1M366 123h1M360 124h1M363 124h1M366 124h1M361 125h1M365 125h1M362 126h3M363 127h1M361 128h5M363 129h1M363 130h1"/></g>
<g id="sign_Sag"><path stroke="#ff0000" d="M33 223h1M27 224h2M32 224h1M29 225h1M32 225h1M29 226h1M32 226h1M28 227h1M32 227h1M28 228h1M32 228h1M27 229h1M32 229h1M27 230h8M32 231h1M34 245h5M37 246h2M36 247h1M38 247h1M35 248h1M38 248h1M34 249h1M38 249h1M33 250h1M24 251h1M32 251h1M25 252h1M31 252h1M26 253h1M30 253h1M27 254h1M29 254h1M28 255h1M27 256h1M29 256h1M26 257h1M30 257h1M25 258h1M31 258h1M24 259h1M32 259h1M23 260h1M22 261h1"/></g>
<g id="houseruler_9"><path stroke="#ff0000" d="M271 70h1M265 71h2M270 71h1M267 72h1M270 72h1M267 73h1M270 73h1M266 74h1M270 74h1M266 75h1M270 75h1M265 76h1M270 76h1M265 77h8M270 78h1"/></g>
<g id="sign_Cap"><path stroke="#ffff00" d="M50 329h1M48 330h5M50 331h1M50 332h1M52 332h2M50 333h2M54 333h1M50 334h1M54 334h1M50 335h1M53 335h1M50 336h1M53 336h1M54 337h1M59 348h1M65 348h1M69 348h3M58 349h2M65 349h2M68 349h1M72 349h1M57 350h1M59 350h1M65 350h1M67 350h1M73 350h1M59 351h1M64 351h1M66 351h1M73 351h1M59 352h1M63 352h1M67 352h1M73 352h1M59 353h1M63 353h1M68 353h1M72 353h1M59 354h1M63 354h1M69 354h3M59 355h1M63 355h1M70 355h1M59 356h1M63 356h1M71 356h1M60 357h1M62 357h1M72 357h1M61 358h1M73 358h1M61 359h1M73 359h1M61 360h1M73 360h1M61 361h1M73 361h1M61 362h1M73 362h1M72 363h1M71 364h1"/></g>
<g id="houseruler_10"><path stroke="#ffff00" d="M169 82h1M167 83h5M169 84h1M169 85h1M171 85h2M169 86h2M173 86h1M169 87h1M173 87h1M169 88h1M172 88h1M169 89h1M172 89h1M173 90h1"/></g>
<g id="sign_Aqu"><path stroke="#00ff00" d="M121 410h1M127 410h1M122 411h1M126 411h1M122 412h1M124 412h1M126 412h1M122 413h5M122 414h1M124 414h1M126 414h1M121 415h1M124 415h1M127 415h1M124 416h1M123 417h1M125 417h1M124 418h1M144 420h1M150 420h1M156 420h1M143 421h2M149 421h2M155 421h1M143 422h1M145 422h1M149 422h1M151 422h1M155 422h1M142 423h1M145 423h1M148 423h1M151 423h1M154 423h1M141 424h1M145 424h1M147 424h1M151 424h1M153 424h1M141 425h1M146 425h2M152 425h2M140 426h1M146 426h1M152 426h1M144 430h1M150 430h1M156 430h1M143 431h2M149 431h2M155 431h1M143 432h1M145 432h1M149 432h1M151 432h1M155 432h1M142 433h1M145 433h1M148 433h1M151 433h1M154 433h1M141 434h1M145 434h1M147 434h1M151 434h1M153 434h1M141 435h1M146 435h2M152 435h2M140 436h1M146 436h1M152 436h1"/></g>
<g id="houseruler_11"><path stroke="#00ff00" d="M104 132h1M110 132h1M105 133h1M109 133h1M105 134h1M107 134h1M109 134h1M105 135h5M105 136h1M107 136h1M109 136h1M104 137h1M107 137h1M110 137h1M107 138h1M106 139h1M108 139h1M107 140h1"/></g>
<g id="sign_Pis"><path stroke="#0000ff" d="M245 440h1M261 440h1M246 441h1M260 441h1M247 442h1M259 442h1M248 443h1M258 443h1M224 444h1M227 444h1M230 444h1M248 444h1M258 444h1M223 445h2M226 445h3M230 445h2M249 445h1M257 445h1M224 446h1M227 446h1M230 446h1M249 446h1M257 446h1M225 447h1M227 447h1M229 447h1M249 447h1M257 447h1M226 448h3M245 448h17M227 449h1M249 449h1M257 449h1M225 450h5M249 450h1M257 450h1M227 451h1M249 451h1M257 451h1M227 452h1M248 452h1M258 452h1M248 453h1M258 453h1M247 454h1M259 454h1M246 455h1M260 455h1M245 456h1M261 456h1"/></g>
<g id="houseruler_12"><path stroke="#0000ff" d="M74 191h1M77 191h1M80 191h1M73 192h2M76 192h3M80 192h2M74 193h1M77 193h1M80 193h1M75 194h1M77 194h1M79 194h1M76 195h3M77 196h1M75 197h5M77 198h1M77 199h1"/></g>
<g id="planet_Plut"><path stroke="#ffffff" d="M146 335h3M149 336h6M155 337h6M161 338h4"/><path stroke="#0000ff" d="M167 333h1M133 334h1M138 334h3M145 334h1M166 334h3M133 335h1M137 335h1M141 335h1M145 335h1M167 335h1M133 336h1M137 336h1M141 336h1M145 336h1M133 337h1M137 337h1M141 337h1M145 337h1M133 338h1M138 338h3M145 338h1M134 339h1M144 339h1M134 340h1M144 340h1M135 341h2M142 341h2M137 342h5M139 343h1M139 344h1M139 345h1M135 346h9M139 347h1M139 348h1M139 349h1M139 350h1"/></g>
<g id="planet_Nept"><path stroke="#ffffff" d="M280 357h1M281 358h1M282 359h1M283 360h1M284 361h1M285 362h1M286 363h1M287 364h1"/><path stroke="#0000ff" d="M278 351h1M277 352h3M278 353h1M284 365h1M290 365h1M296 365h1M284 366h1M290 366h1M296 366h1M283 367h3M288 367h5M295 367h3M284 368h1M290 368h1M296 368h1M284 369h1M290 369h1M296 369h1M285 370h1M290 370h1M295 370h1M285 371h1M290 371h1M295 371h1M286 372h2M290 372h1M293 372h2M288 373h5M290 374h1M290 375h1M290 376h1M286 377h9M290 378h1M290 379h1M290 380h1M290 381h1"/></g>
<g id="planet_Uran"><path stroke="#808080" d="M360 268h3M363 269h4M367 270h3"/><path stroke="#00ff00" d="M373 264h1M385 264h1M355 265h1M374 265h1M384 265h1M354 266h3M375 266h1M383 266h1M355 267h1M375 267h1M383 267h1M375 268h1M379 268h1M383 268h1M375 269h1M379 269h1M383 269h1M375 270h9M375 271h1M379 271h1M383 271h1M375 272h1M379 272h1M383 272h1M374 273h1M379 273h1M384 273h1M373 274h1M379 274h1M385 274h1M379 275h1M378 276h3M377 277h1M381 277h1M377 278h1M381 278h1M377 279h1M381 279h1M378 280h3"/></g>
<g id="planet_Satu"><path stroke="#ffffff" d="M276 358h1M275 359h1M275 360h1M274 361h1M274 362h1M273 363h1M273 364h1M272 365h1M272 366h1M271 367h1M271 368h1M270 369h1"/><path stroke="#ffff00" d="M275 352h1M274 353h3M275 354h1M270 371h1M270 372h1M266 373h9M270 374h1M270 375h1M270 376h1M270 377h1M274 377h3M270 378h1M273 378h1M277 378h1M270 379h3M278 379h1M270 380h1M278 380h1M270 381h1M278 381h1M270 382h1M277 382h1M270 383h1M276 383h1M270 384h1M276 384h1M270 385h1M276 385h1M277 386h1M278 387h1"/></g>
<g id="planet_Jupi"><path stroke="#808080" d="M347 159h1M345 160h2M344 161h1M343 162h1M341 163h2M340 164h1M339 165h1"/><path stroke="#ff0000" d="M360 145h1M359 146h1M349 147h2M358 147h1M351 148h1M358 148h1M352 149h1M358 149h1M352 150h1M358 150h1M352 151h1M358 151h1M351 152h1M358 152h1M351 153h1M358 153h1M350 154h1M358 154h1M350 155h1M358 155h1M349 156h1M358 156h1M349 157h1M358 157h1M348 158h1M358 158h1M348 159h15M358 160h1M358 161h1M335 167h1M334 168h3M335 169h1"/></g>
<g id="planet_Mars"><path stroke="#ffffff" d="M167 340h1M165 341h2M164 342h1M163 343h1M161 344h2M160 345h1"/><path stroke="#ff0000" d="M170 336h1M169 337h3M170 338h1M156 346h6M160 347h2M159 348h1M161 348h1M158 349h1M161 349h1M157 350h1M161 350h1M156 351h1M161 351h1M148 352h5M155 352h1M147 353h1M153 353h2M146 354h1M154 354h1M145 355h1M155 355h1M145 356h1M155 356h1M145 357h1M155 357h1M145 358h1M155 358h1M145 359h1M155 359h1M146 360h1M154 360h1M147 361h1M153 361h1M148 362h5"/></g>
<g id="planet_Venu"><path stroke="#ffffff" d="M187 352h1M187 353h1M188 354h1M188 355h1M188 356h1M188 357h1M189 358h1M189 359h1M189 360h1M189 361h1M190 362h1M190 363h1M190 364h1"/><path stroke="#ffff00" d="M189 347h1M188 348h3M189 349h1M184 364h5M183 365h1M189 365h1M182 366h1M190 366h1M182 367h1M190 367h1M182 368h1M190 368h1M182 369h1M190 369h1M182 370h1M190 370h1M183 371h1M189 371h1M184 372h5M186 373h1M186 374h1M186 375h1M182 376h9M186 377h1M186 378h1M186 379h1M186 380h1"/></g>
<g id="planet_Merc"><path stroke="#ffffff" d="M188 353h1M189 354h1M190 355h1M191 356h1M192 357h2M194 358h1M195 359h1M196 360h1M197 361h1M198 362h1M199 363h1M200 364h1M201 365h2M203 366h1M204 367h1M205 368h1M206 369h1"/><path stroke="#00ff00" d="M190 347h1M189 348h3M190 349h1M200 370h1M208 370h1M201 371h1M207 371h1M202 372h5M201 373h1M207 373h1M200 374h1M208 374h1M200 375h1M208 375h1M200 376h1M208 376h1M200 377h1M208 377h1M200 378h1M208 378h1M201 379h1M207 379h1M202 380h5M204 381h1M204 382h1M204 383h1M200 384h9M204 385h1M204 386h1"/></g>
<g id="planet_Moon"><path stroke="#ffffff" d="M358 179h2M356 180h2M354 181h2M352 182h2M350 183h2"/><path stroke="#0000ff" d="M363 166h5M362 167h1M368 167h2M361 168h1M370 168h1M362 169h1M371 169h1M363 170h1M372 170h1M364 171h1M372 171h1M364 172h1M373 172h1M365 173h1M373 173h1M365 174h1M373 174h1M365 175h1M373 175h1M364 176h1M373 176h1M364 177h1M372 177h1M363 178h1M372 178h1M362 179h1M371 179h1M361 180h1M370 180h1M362 181h1M368 181h2M363 182h5M346 184h1M345 185h3M346 186h1"/></g>
<g id="planet_Sun"><path stroke="#ffffff" d="M176 346h1M176 347h1M176 348h1M175 349h1M175 350h1M175 351h1M175 352h1M175 353h1M174 354h1M174 355h1M174 356h1"/><path stroke="#ff0000" d="M179 341h1M178 342h3M179 343h1M167 356h5M165 357h2M172 357h2M164 358h1M174 358h1M163 359h1M175 359h1M162 360h1M176 360h1M162 361h1M176 361h1M161 362h1M177 362h1M161 363h1M177 363h1M161 364h1M169 364h1M177 364h1M161 365h1M177 365h1M161 366h1M177 366h1M162 367h1M176 367h1M162 368h1M176 368h1M163 369h1M175 369h1M164 370h1M174 370h1M165 371h2M172 371h2M167 372h5"/></g>
<g id="aspects"><path stroke="#00ffff" d="M351 265h1M350 266h1M349 267h1M348 268h1M347 269h1M346 270h1M345 271h2M344 272h1M344 273h1M343 274h1M342 275h1M341 276h1M340 277h1M339 278h1M338 279h1M337 280h1M336 281h1M335 282h1M334 283h2M333 284h1M332 285h2M331 286h1M331 287h1M330 288h1M329 289h1M328 290h1M327 291h1M326 292h1M325 293h1M324 294h1M323 295h2M322 296h1M321 297h2M320 298h1M319 299h2M318 300h1M318 301h1M317 302h1M316 303h1M315 304h1M314 305h1M313 306h1M312 307h2M311 308h1M310 309h2M309 310h1M308 311h2M307 312h1M306 313h2M305 314h1M305 315h1M304 316h1M303 317h1M302 318h1M301 319h2M300 320h1M299 321h2M298 322h1M297 323h2M296 324h1M295 325h2M294 326h1M293 327h2M292 328h1M292 329h1M291 330h1M173 331h2M177 331h1M290 331h2M180 332h2M183 332h1M289 332h1M173 333h1M185 333h2M189 333h1M288 333h2M177 334h1M181 334h1M189 334h1M192 334h2M195 334h1M198 334h1M287 334h1M185 335h1M189 335h1M197 335h1M201 335h1M204 335h1M286 335h2M193 336h1M197 336h1M201 336h1M205 336h1M207 336h1M210 336h1M285 336h1M201 337h1M205 337h1M209 337h1M213 337h1M216 337h1M284 337h2M209 338h1M213 338h1M219 338h1M222 338h1M283 338h1M217 339h1M221 339h1M225 339h1M228 339h1M282 339h2M221 340h1M225 340h1M231 340h1M234 340h1M281 340h1M229 341h1M233 341h1M237 341h1M240 341h1M280 341h2M233 342h1M237 342h1M241 342h1M243 342h1M246 342h1M279 342h1M241 343h1M245 343h1M249 343h1M252 343h1M279 343h2M245 344h1M253 344h1M255 344h1M257 344h2M278 344h1M249 345h1M253 345h1M261 345h1M264 345h1M277 345h2M257 346h1M265 346h1M267 346h1M269 346h2M276 346h1M261 347h1M273 347h1M275 347h1M265 348h1M269 348h1M274 348h1M273 349h1"/><path stroke="#00ff00" d="M347 266h1M343 268h1M339 269h1M335 271h1M331 272h1M327 274h1M323 275h1M319 276h1M315 278h1M311 279h1M307 281h1M303 282h1M299 284h1M295 285h1M291 287h1M287 288h1M283 289h1M279 291h1M275 292h1M271 294h1M267 295h1M263 297h1M259 298h1M255 299h1M251 301h1M247 302h1M243 304h1M239 305h1M235 307h1M231 308h1M227 310h1M223 311h1M219 312h1M215 314h1M211 315h1M207 317h1M203 318h1M199 320h1M195 321h1M191 322h1M187 324h1M183 325h1M179 327h1M175 328h1M171 330h1"/><path stroke="#ffff00" d="M171 331h1M173 332h1M175 334h1M177 335h1M178 336h1M181 338h1M184 340h2M187 341h1M189 342h1M190 343h2M192 344h1M275 348h1"/><path stroke="#ff0000" d="M341 187h1M339 191h1M338 195h1M336 199h1M334 203h1M333 207h1M331 211h1M330 215h1M328 219h1M326 223h1M325 227h1M323 231h1M321 235h1M320 239h1M318 243h1M317 247h1M315 251h1M313 255h1M312 259h1M310 263h1M308 267h1M307 271h1M305 275h1M304 279h1M302 283h1M300 287h1M299 291h1M297 295h1M295 299h1M294 303h1M292 307h1M291 311h1M289 315h1M287 319h1M286 323h1M284 327h1M282 331h1M281 335h1M279 339h1M278 343h1M276 347h1"/></g>
<g id="side_sign_1"><path stroke="#ff0000" d="M630 136h3M631 137h2M630 138h1M632 138h1M625 139h1M629 139h1M626 140h1M628 140h1M627 141h1M626 142h1M628 142h1M625 143h1M629 143h1M624 144h1"/></g>
<g id="side_sign_2"><path stroke="#ffff00" d="M625 146h1M628 146h1M630 146h2M624 147h2M628 147h2M632 147h1M625 148h1M627 148h1M629 148h1M632 148h1M625 149h1M627 149h1M630 149h2M625 150h1M627 150h1M631 150h1M626 151h1M632 151h1M626 152h1M632 152h1M626 153h1M632 153h1M631 154h1"/></g>
<g id="side_sign_3"><path stroke="#00ff00" d="M626 156h1M629 156h1M632 156h1M625 157h2M628 157h2M631 157h1M625 158h1M627 158h2M630 158h2M624 159h1M627 159h1M630 159h1M626 161h1M629 161h1M632 161h1M625 162h2M628 162h2M631 162h1M625 163h1M627 163h2M630 163h2M624 164h1M627 164h1M630 164h1"/></g>
<g id="side_sign_4"><path stroke="#0000ff" d="M624 166h1M632 166h1M625 167h1M631 167h1M626 168h1M630 168h1M626 169h1M630 169h1M624 170h9M626 171h1M630 171h1M626 172h1M630 172h1M625 173h1M631 173h1M624 174h1M632 174h1"/></g>
<g id="side_sign_5"><path stroke="#ff0000" d="M625 176h2M630 176h2M624 177h1M627 177h1M629 177h1M632 177h1M624 178h1M627 178h1M629 178h1M632 178h1M625 179h1M627 179h1M629 179h1M631 179h1M628 180h1M628 181h1M628 182h1M628 183h1M628 184h1"/></g>
<g id="side_sign_6"><path stroke="#ffff00" d="M625 186h1M631 186h1M626 187h1M630 187h1M627 188h3M626 189h1M630 189h1M625 190h1M631 190h1M625 191h1M631 191h1M625 192h1M631 192h1M626 193h1M630 193h1M627 194h3"/></g>
<g id="side_sign_7"><path stroke="#00ff00" d="M625 196h1M632 196h1M626 197h6M627 198h1M630 198h1M627 199h1M630 199h1M627 200h1M630 200h1M627 201h1M630 201h1M627 202h1M630 202h1M626 203h6M625 204h1M632 204h1"/></g>
<g id="side_sign_8"><path stroke="#0000ff" d="M627 207h3M625 208h2M630 208h2M624 209h1M629 209h1M632 209h1M625 210h2M629 210h1M632 210h1M624 211h1M627 211h1M630 211h2M624 212h1M627 212h1M632 212h1M625 213h2M630 213h2M627 214h3"/></g>
<g id="side_sign_9"><path stroke="#ff0000" d="M627 216h3M626 217h1M630 217h1M625 218h1M631 218h1M625 219h1M631 219h1M625 220h1M631 220h1M626 221h1M630 221h1M624 222h1M626 222h1M630 222h1M625 223h1M631 223h1M632 224h1"/></g>
<g id="side_sign_10"><path stroke="#ffff00" d="M624 226h1M626 226h1M628 226h1M625 227h1M627 227h1M629 227h1M631 227h1M625 228h1M627 228h1M629 228h3M625 229h1M627 229h1M629 229h1M631 229h1M625 230h1M627 230h1M629 230h1M631 230h1M625 231h1M627 231h1M629 231h1M631 231h1M625 232h1M627 232h1M629 232h1M631 232h1M625 233h1M627 233h1M630 233h1M629 234h1M631 234h1"/></g>
<g id="side_sign_11"><path stroke="#00ff00" d="M627 238h3M626 239h1M630 239h1M626 240h1M630 240h1M624 241h4M629 241h4M624 243h9"/></g>
<g id="side_sign_12"><path stroke="#0000ff" d="M624 246h1M626 246h1M628 246h1M625 247h1M627 247h1M629 247h1M625 248h1M627 248h1M629 248h1M625 249h1M627 249h1M629 249h1M625 250h1M627 250h1M629 250h1M625 251h1M627 251h1M629 251h1M625 252h1M627 252h1M629 252h1M632 252h1M625 253h1M627 253h1M629 253h1M632 253h1M630 254h2"/></g>
<g id="side_obj_Sun"><path stroke="#ff0000" d="M627 266h3M625 267h2M630 267h2M625 268h1M631 268h1M624 269h1M632 269h1M624 270h1M628 270h1M632 270h1M624 271h1M632 271h1M625 272h1M631 272h1M625 273h2M630 273h2M627 274h3"/></g>
<g id="side_obj_Moon"><path stroke="#0000ff" d="M626 276h3M625 277h1M629 277h2M626 278h1M630 278h1M627 279h1M631 279h1M627 280h1M631 280h1M627 281h1M631 281h1M626 282h1M630 282h1M625 283h1M629 283h2M626 284h3"/></g>
<g id="side_obj_Merc"><path stroke="#00ff00" d="M626 286h1M630 286h1M627 287h3M626 288h1M630 288h1M626 289h1M630 289h1M626 290h1M630 290h1M627 291h3M628 292h1M626 293h5M628 294h1"/></g>
<g id="side_obj_Venu"><path stroke="#ffff00" d="M627 296h3M626 297h1M630 297h1M626 298h1M630 298h1M626 299h1M630 299h1M627 300h3M628 301h1M626 302h5M628 303h1M628 304h1"/></g>
<g id="side_obj_Mars"><path stroke="#ff0000" d="M630 306h3M631 307h2M630 308h1M632 308h1M626 309h2M629 309h1M625 310h1M628 310h1M624 311h1M629 311h1M624 312h1M629 312h1M625 313h1M628 313h1M626 314h2"/></g>
<g id="side_obj_Jupi"><path stroke="#ff0000" d="M631 316h1M625 317h2M630 317h1M627 318h1M630 318h1M627 319h1M630 319h1M626 320h1M630 320h1M626 321h1M630 321h1M625 322h1M630 322h1M625 323h8M630 324h1"/></g>
<g id="side_obj_Satu"><path stroke="#ffff00" d="M627 326h1M625 327h5M627 328h1M627 329h1M629 329h2M627 330h2M631 330h1M627 331h1M631 331h1M627 332h1M630 332h1M627 333h1M630 333h1M631 334h1"/></g>
<g id="side_obj_Uran"><path stroke="#00ff00" d="M625 336h1M631 336h1M626 337h1M630 337h1M626 338h1M628 338h1M630 338h1M626 339h5M626 340h1M628 340h1M630 340h1M625 341h1M628 341h1M631 341h1M628 342h1M627 343h1M629 343h1M628 344h1"/></g>
<g id="side_obj_Nept"><path stroke="#0000ff" d="M625 346h1M628 346h1M631 346h1M624 347h2M627 347h3M631 347h2M625 348h1M628 348h1M631 348h1M626 349h1M628 349h1M630 349h1M627 350h3M628 351h1M626 352h5M628 353h1M628 354h1"/></g>
<g id="side_obj_Plut"><path stroke="#0000ff" d="M625 356h1M628 356h1M631 356h1M625 357h1M627 357h1M629 357h1M631 357h1M625 358h1M628 358h1M631 358h1M626 359h1M630 359h1M627 360h3M628 361h1M626 362h5M628 363h1M628 364h1"/></g>
</g>
<g id="house-numbers" class="hn">
<text transform="translate(78.50,291.00) scale(0.800,1)" text-anchor="middle" fill="#ff0000">1</text>
<text transform="translate(136.50,376.00) scale(0.800,1)" text-anchor="middle" fill="#ffff00">2</text>
<text transform="translate(236.50,412.00) scale(0.800,1)" text-anchor="middle" fill="#00ff00">3</text>
<text transform="translate(327.50,387.00) scale(0.800,1)" text-anchor="middle" fill="#0000ff">4</text>
<text transform="translate(381.50,333.00) scale(0.800,1)" text-anchor="middle" fill="#ff0000">5</text>
<text transform="translate(404.50,273.00) scale(0.800,1)" text-anchor="middle" fill="#ffff00">6</text>
<text transform="translate(400.50,197.00) scale(0.800,1)" text-anchor="middle" fill="#00ff00">7</text>
<text transform="translate(342.50,112.00) scale(0.800,1)" text-anchor="middle" fill="#0000ff">8</text>
<text transform="translate(242.50,76.00) scale(0.800,1)" text-anchor="middle" fill="#ff0000">9</text>
<text transform="translate(147.50,101.00) scale(0.800,1)" text-anchor="middle" fill="#ffff00">1</text><text transform="translate(155.50,101.00) scale(0.800,1)" text-anchor="middle" fill="#ffff00">0</text>
<text transform="translate(93.50,155.00) scale(0.800,1)" text-anchor="middle" fill="#00ff00">1</text><text transform="translate(101.50,155.00) scale(0.800,1)" text-anchor="middle" fill="#00ff00">1</text>
<text transform="translate(70.50,215.00) scale(0.800,1)" text-anchor="middle" fill="#0000ff">1</text><text transform="translate(78.50,215.00) scale(0.800,1)" text-anchor="middle" fill="#0000ff">2</text>
</g>
<g id="sidebar" class="sb">
<text x="486" y="14" xml:space="preserve"><tspan x="486" fill="#ffffff">Astrolog 5.41G</tspan></text>
<text x="486" y="24" xml:space="preserve"><tspan x="486" fill="#c0c0c0">Chart of the Moment</tspan></text>
<text x="486" y="34" xml:space="preserve"><tspan x="486" fill="#ffffff">Fri January 30, 2026</tspan></text>
<text x="486" y="44" xml:space="preserve"><tspan x="486" fill="#ffffff"> 3:24:00am (ST -8:00 GMT)</tspan></text>
<text x="486" y="54" xml:space="preserve"><tspan x="486" fill="#c0c0c0">San Francisco, CA</tspan></text>
<text x="486" y="64" xml:space="preserve"><tspan x="486" fill="#c0c0c0">122°41'00"W 37°79'00"N</tspan></text>
<text x="486" y="74" xml:space="preserve"><tspan x="486" fill="#c0c0c0">Placidus houses.</tspan></text>
<text x="486" y="84" xml:space="preserve"><tspan x="486" fill="#c0c0c0">Tropical, Geocentric.</tspan></text>
<text x="486" y="94" xml:space="preserve"><tspan x="486" fill="#ffffff">Julian Day = 2461070.9750</tspan></text>
<text x="486" y="104" xml:space="preserve"><tspan x="486" fill="#c0c0c0">Obliquity = 23°26'09"</tspan></text>
<text x="486" y="114" xml:space="preserve"><tspan x="486" fill="#c0c0c0">Sidereal time: 11:52:07</tspan></text>
<text x="486" y="124" xml:space="preserve"><tspan x="486" fill="#c0c0c0">DeltaT =  95.3153</tspan></text>
<text x="486" y="144" xml:space="preserve"><tspan x="486" fill="#ff0000"> 1st house: 10Sag55</tspan></text>
<text x="486" y="154" xml:space="preserve"><tspan x="486" fill="#ffff00"> 2nd house: 13Cap58</tspan></text>
<text x="486" y="164" xml:space="preserve"><tspan x="486" fill="#00ff00"> 3rd house: 21Aqu48</tspan></text>
<text x="486" y="174" xml:space="preserve"><tspan x="486" fill="#0000ff"> 4th house: 27Pis51</tspan></text>
<text x="486" y="184" xml:space="preserve"><tspan x="486" fill="#ff0000"> 5th house: 27Ari11</tspan></text>
<text x="486" y="194" xml:space="preserve"><tspan x="486" fill="#ffff00"> 6th house: 20Tau36</tspan></text>
<text x="486" y="204" xml:space="preserve"><tspan x="486" fill="#00ff00"> 7th house: 10Gem55</tspan></text>
<text x="486" y="214" xml:space="preserve"><tspan x="486" fill="#0000ff"> 8th house: 13Can58</tspan></text>
<text x="486" y="224" xml:space="preserve"><tspan x="486" fill="#ff0000"> 9th house: 21Leo48</tspan></text>
<text x="486" y="234" xml:space="preserve"><tspan x="486" fill="#ffff00">10th house: 27Vir51</tspan></text>
<text x="486" y="244" xml:space="preserve"><tspan x="486" fill="#00ff00">11th house: 27Lib11</tspan></text>
<text x="486" y="254" xml:space="preserve"><tspan x="486" fill="#0000ff">12th house: 20Sco36</tspan></text>
<text x="486" y="274" xml:space="preserve"><tspan x="486" fill="#ff0000"> Sun:</tspan><tspan x="522" fill="#00ff00">10Aqu35</tspan><tspan x="576" fill="#c0c0c0">+ 0°00'</tspan></text>
<text x="486" y="284" xml:space="preserve"><tspan x="486" fill="#0000ff">Moon:</tspan><tspan x="522" fill="#0000ff"> 7Can49</tspan><tspan x="576" fill="#c0c0c0">+ 4°34'</tspan></text>
<text x="486" y="294" xml:space="preserve"><tspan x="486" fill="#00ff00">Merc:</tspan><tspan x="522" fill="#00ff00">16Aqu47</tspan><tspan x="576" fill="#c0c0c0">- 1°58'</tspan></text>
<text x="486" y="304" xml:space="preserve"><tspan x="486" fill="#ffff00">Venu:</tspan><tspan x="522" fill="#00ff00">16Aqu16</tspan><tspan x="576" fill="#c0c0c0">- 1°20'</tspan></text>
<text x="486" y="314" xml:space="preserve"><tspan x="486" fill="#ff0000">Mars:</tspan><tspan x="522" fill="#00ff00"> 5Aqu32</tspan><tspan x="576" fill="#c0c0c0">- 1°02'</tspan></text>
<text x="486" y="324" xml:space="preserve"><tspan x="486" fill="#ff0000">Jupi:</tspan><tspan x="522" fill="#0000ff">17Can32</tspan><tspan x="564" fill="#ffffff">R</tspan><tspan x="576" fill="#c0c0c0">+ 0°18'</tspan></text>
<text x="486" y="334" xml:space="preserve"><tspan x="486" fill="#ffff00">Satu:</tspan><tspan x="522" fill="#0000ff">28Pis30</tspan><tspan x="576" fill="#c0c0c0">- 2°11'</tspan></text>
<text x="486" y="344" xml:space="preserve"><tspan x="486" fill="#00ff00">Uran:</tspan><tspan x="522" fill="#ffff00">27Tau28</tspan><tspan x="564" fill="#ffffff">R</tspan><tspan x="576" fill="#c0c0c0">- 0°11'</tspan></text>
<text x="486" y="354" xml:space="preserve"><tspan x="486" fill="#0000ff">Nept:</tspan><tspan x="522" fill="#ff0000"> 0Ari06</tspan><tspan x="576" fill="#c0c0c0">- 1°19'</tspan></text>
<text x="486" y="364" xml:space="preserve"><tspan x="486" fill="#0000ff">Plut:</tspan><tspan x="522" fill="#00ff00"> 3Aqu39</tspan><tspan x="576" fill="#c0c0c0">- 3°48'</tspan></text>
<text x="486" y="384" xml:space="preserve"><tspan x="486" fill="#c0c0c0">Fire: 1, Earth: 1,</tspan></text>
<text x="486" y="394" xml:space="preserve"><tspan x="486" fill="#c0c0c0">Air : 5, Water: 3</tspan></text>
<text x="486" y="404" xml:space="preserve"><tspan x="486" fill="#c0c0c0">Car: 3, Fix: 6, Mut: 1</tspan></text>
<text x="486" y="414" xml:space="preserve"><tspan x="486" fill="#c0c0c0">Yang: 6, Yin: 4</tspan></text>
<text x="486" y="424" xml:space="preserve"><tspan x="486" fill="#c0c0c0">M: 2, N: 8, A: 5, D: 5</tspan></text>
<text x="486" y="434" xml:space="preserve"><tspan x="486" fill="#c0c0c0">Ang: 3, Suc: 6, Cad: 1</tspan></text>
<text x="486" y="444" xml:space="preserve"><tspan x="486" fill="#c0c0c0">Learn: 4, Share: 6</tspan></text>
</g>
</svg>
</body></html>
